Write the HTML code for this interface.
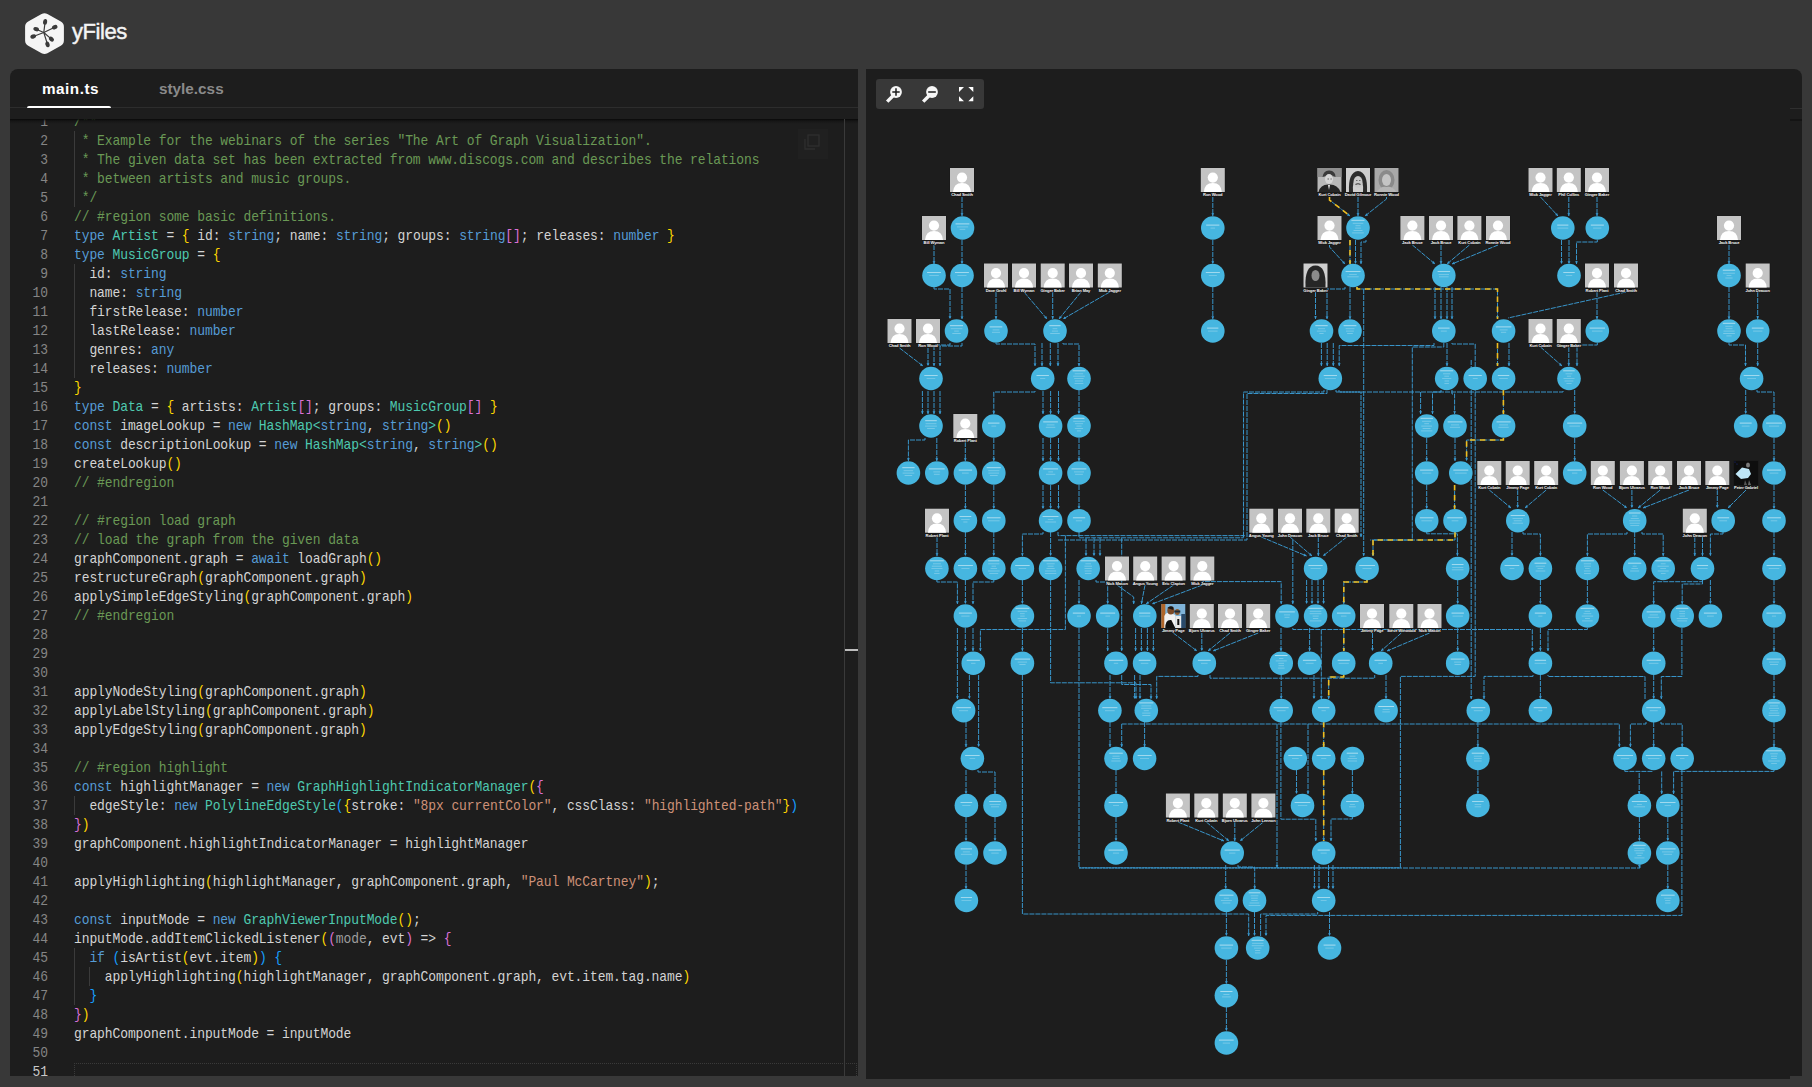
<!DOCTYPE html>
<html><head><meta charset="utf-8">
<style>
*{margin:0;padding:0;box-sizing:border-box}
html,body{width:1812px;height:1087px;overflow:hidden;background:#383838;font-family:"Liberation Sans",sans-serif}
#hdr{position:absolute;left:0;top:0;width:1812px;height:69px;background:#383838}
#logo{position:absolute;left:24px;top:12px;width:41px;height:43px}
#brand{position:absolute;left:72px;top:19px;font-size:22px;line-height:26px;color:#f4f4f4;letter-spacing:-0.45px;-webkit-text-stroke:0.45px #f4f4f4}
#left{position:absolute;left:10px;top:69px;width:848px;height:1007px;background:#1d1d1d;border-top-left-radius:8px;overflow:hidden}
#tabs{position:absolute;left:0;top:0;width:848px;height:39px;border-bottom:1px solid #2d2d2d}
.tab{position:absolute;top:10.7px;font-size:15.3px;line-height:18px;font-weight:bold;letter-spacing:0px}
#t1{left:32px;color:#ffffff;letter-spacing:0.5px}
#t2{left:149px;color:#8a8a8a}
#uline{position:absolute;left:17px;top:37px;width:84px;height:2.2px;background:#fff;border-radius:2px 2px 0 0}
#code{position:absolute;left:0;top:50px;width:834px;height:957px;overflow:hidden;font-family:"Liberation Mono",monospace;font-size:13px;color:#d4d4d4}
#shadow{position:absolute;left:0;top:50px;width:848px;height:5px;background:linear-gradient(rgba(8,8,8,0.95),rgba(8,8,8,0.35) 40%,rgba(29,29,29,0))}
.ln{position:absolute;left:0;height:19px;line-height:19px;white-space:pre;width:834px}
.num{position:absolute;right:796px;width:40px;top:1.4px;text-align:right;color:#858585;transform:scaleY(1.09);transform-origin:0 70%}
.tx{position:absolute;left:64px;top:1.4px;letter-spacing:-0.1px;transform:scaleY(1.09);transform-origin:0 70%}
.c{color:#6a9955}.k{color:#569cd6}.t{color:#4ec9b0}.s{color:#ce9178}.y{color:#ffd700}.p{color:#da70d6}.b{color:#179fff}.g{color:#9e9e9e}
#ruler{position:absolute;left:834px;top:50px;width:1px;height:957px;background:#3a3a3a}
.guide{position:absolute;width:1px;background:#3b3b3b}
#curline{position:absolute;left:64px;top:994px;width:783px;height:19px;border:1px dotted #3a3a3a;border-bottom:none}
#copyic{position:absolute;left:788px;top:60px;width:30px;height:30px;background:#202020}
#marker{position:absolute;left:835px;top:580px;width:13px;height:2px;background:#bdbdbd}
#gap{position:absolute;left:858px;top:69px;width:8px;height:1018px;background:#383838}
#right{position:absolute;left:866px;top:69px;width:936px;height:1010px;background:#1d1d1d;border-top-right-radius:8px;overflow:hidden}
#tb{position:absolute;left:876px;top:79px;width:108px;height:30px;background:#383838;border-radius:3px}
#gsvg{position:absolute;left:0;top:0}
</style></head><body>
<div id="hdr">
<svg id="logo" viewBox="0 0 41 43"><polygon points="20.5,7.3 33.9,14.8 33.9,28.6 20.5,36 7.1,28.6 7.1,14.8" fill="#f5f5f5" stroke="#f5f5f5" stroke-width="12" stroke-linejoin="round"/><g fill="#3a3a3a" stroke="#3a3a3a"><path d="M19.8 20.5L21.1 9.9" stroke-width="1.2"/><ellipse cx="21.10" cy="9.90" rx="2.9" ry="2.05" transform="rotate(-83.0 21.10 9.90)" stroke="none"/><path d="M19.8 20.5L30.7 15.2" stroke-width="1.2"/><ellipse cx="30.70" cy="15.20" rx="2.9" ry="2.05" transform="rotate(-25.9 30.70 15.20)" stroke="none"/><path d="M19.8 20.5L12.2 17.2" stroke-width="1.2"/><ellipse cx="12.20" cy="17.20" rx="2.9" ry="2.05" transform="rotate(-156.5 12.20 17.20)" stroke="none"/><path d="M19.8 20.5L9.2 24.5" stroke-width="1.2"/><ellipse cx="9.20" cy="24.50" rx="2.9" ry="2.05" transform="rotate(159.3 9.20 24.50)" stroke="none"/><path d="M19.8 20.5L27.4 27.1" stroke-width="1.2"/><ellipse cx="27.40" cy="27.10" rx="2.9" ry="2.05" transform="rotate(41.0 27.40 27.10)" stroke="none"/><path d="M19.8 20.5L23.5 32.4" stroke-width="1.2"/><ellipse cx="23.50" cy="32.40" rx="2.9" ry="2.05" transform="rotate(72.7 23.50 32.40)" stroke="none"/></g></svg>
<div id="brand">yFiles</div>
</div>
<div id="left">
<div id="tabs"><div class="tab" id="t1">main.ts</div><div class="tab" id="t2">style.css</div><div id="uline"></div></div>
<div id="code">
<div class="ln" style="top:-7.5px"><span class="num">1</span><span class="tx"><span class="c">/**</span></span></div>
<div class="ln" style="top:11.5px"><span class="num">2</span><span class="tx"><span class="c"> * Example for the webinars of the series &quot;The Art of Graph Visualization&quot;.</span></span></div>
<div class="ln" style="top:30.5px"><span class="num">3</span><span class="tx"><span class="c"> * The given data set has been extracted from www.discogs.com and describes the relations</span></span></div>
<div class="ln" style="top:49.5px"><span class="num">4</span><span class="tx"><span class="c"> * between artists and music groups.</span></span></div>
<div class="ln" style="top:68.5px"><span class="num">5</span><span class="tx"><span class="c"> */</span></span></div>
<div class="ln" style="top:87.5px"><span class="num">6</span><span class="tx"><span class="c">// #region some basic definitions.</span></span></div>
<div class="ln" style="top:106.5px"><span class="num">7</span><span class="tx"><span class="k">type</span> <span class="t">Artist</span> = <span class="y">{</span> id: <span class="k">string</span>; name: <span class="k">string</span>; groups: <span class="k">string</span><span class="p">[]</span>; releases: <span class="k">number</span> <span class="y">}</span></span></div>
<div class="ln" style="top:125.5px"><span class="num">8</span><span class="tx"><span class="k">type</span> <span class="t">MusicGroup</span> = <span class="y">{</span></span></div>
<div class="ln" style="top:144.5px"><span class="num">9</span><span class="tx">  id: <span class="k">string</span></span></div>
<div class="ln" style="top:163.5px"><span class="num">10</span><span class="tx">  name: <span class="k">string</span></span></div>
<div class="ln" style="top:182.5px"><span class="num">11</span><span class="tx">  firstRelease: <span class="k">number</span></span></div>
<div class="ln" style="top:201.5px"><span class="num">12</span><span class="tx">  lastRelease: <span class="k">number</span></span></div>
<div class="ln" style="top:220.5px"><span class="num">13</span><span class="tx">  genres: <span class="k">any</span></span></div>
<div class="ln" style="top:239.5px"><span class="num">14</span><span class="tx">  releases: <span class="k">number</span></span></div>
<div class="ln" style="top:258.5px"><span class="num">15</span><span class="tx"><span class="y">}</span></span></div>
<div class="ln" style="top:277.5px"><span class="num">16</span><span class="tx"><span class="k">type</span> <span class="t">Data</span> = <span class="y">{</span> artists: <span class="t">Artist</span><span class="p">[]</span>; groups: <span class="t">MusicGroup</span><span class="p">[]</span> <span class="y">}</span></span></div>
<div class="ln" style="top:296.5px"><span class="num">17</span><span class="tx"><span class="k">const</span> imageLookup = <span class="k">new</span> <span class="t">HashMap&lt;</span><span class="k">string</span>, <span class="k">string</span><span class="t">&gt;</span><span class="y">()</span></span></div>
<div class="ln" style="top:315.5px"><span class="num">18</span><span class="tx"><span class="k">const</span> descriptionLookup = <span class="k">new</span> <span class="t">HashMap&lt;</span><span class="k">string</span>, <span class="k">string</span><span class="t">&gt;</span><span class="y">()</span></span></div>
<div class="ln" style="top:334.5px"><span class="num">19</span><span class="tx">createLookup<span class="y">()</span></span></div>
<div class="ln" style="top:353.5px"><span class="num">20</span><span class="tx"><span class="c">// #endregion</span></span></div>
<div class="ln" style="top:372.5px"><span class="num">21</span><span class="tx"></span></div>
<div class="ln" style="top:391.5px"><span class="num">22</span><span class="tx"><span class="c">// #region load graph</span></span></div>
<div class="ln" style="top:410.5px"><span class="num">23</span><span class="tx"><span class="c">// load the graph from the given data</span></span></div>
<div class="ln" style="top:429.5px"><span class="num">24</span><span class="tx">graphComponent.graph = <span class="k">await</span> loadGraph<span class="y">()</span></span></div>
<div class="ln" style="top:448.5px"><span class="num">25</span><span class="tx">restructureGraph<span class="y">(</span>graphComponent.graph<span class="y">)</span></span></div>
<div class="ln" style="top:467.5px"><span class="num">26</span><span class="tx">applySimpleEdgeStyling<span class="y">(</span>graphComponent.graph<span class="y">)</span></span></div>
<div class="ln" style="top:486.5px"><span class="num">27</span><span class="tx"><span class="c">// #endregion</span></span></div>
<div class="ln" style="top:505.5px"><span class="num">28</span><span class="tx"></span></div>
<div class="ln" style="top:524.5px"><span class="num">29</span><span class="tx"></span></div>
<div class="ln" style="top:543.5px"><span class="num">30</span><span class="tx"></span></div>
<div class="ln" style="top:562.5px"><span class="num">31</span><span class="tx">applyNodeStyling<span class="y">(</span>graphComponent.graph<span class="y">)</span></span></div>
<div class="ln" style="top:581.5px"><span class="num">32</span><span class="tx">applyLabelStyling<span class="y">(</span>graphComponent.graph<span class="y">)</span></span></div>
<div class="ln" style="top:600.5px"><span class="num">33</span><span class="tx">applyEdgeStyling<span class="y">(</span>graphComponent.graph<span class="y">)</span></span></div>
<div class="ln" style="top:619.5px"><span class="num">34</span><span class="tx"></span></div>
<div class="ln" style="top:638.5px"><span class="num">35</span><span class="tx"><span class="c">// #region highlight</span></span></div>
<div class="ln" style="top:657.5px"><span class="num">36</span><span class="tx"><span class="k">const</span> highlightManager = <span class="k">new</span> <span class="t">GraphHighlightIndicatorManager</span><span class="y">(</span><span class="p">{</span></span></div>
<div class="ln" style="top:676.5px"><span class="num">37</span><span class="tx">  edgeStyle: <span class="k">new</span> <span class="t">PolylineEdgeStyle</span><span class="b">(</span><span class="y">{</span>stroke: <span class="s">&quot;8px currentColor&quot;</span>, cssClass: <span class="s">&quot;highlighted-path&quot;</span><span class="y">}</span><span class="b">)</span></span></div>
<div class="ln" style="top:695.5px"><span class="num">38</span><span class="tx"><span class="p">}</span><span class="y">)</span></span></div>
<div class="ln" style="top:714.5px"><span class="num">39</span><span class="tx">graphComponent.highlightIndicatorManager = highlightManager</span></div>
<div class="ln" style="top:733.5px"><span class="num">40</span><span class="tx"></span></div>
<div class="ln" style="top:752.5px"><span class="num">41</span><span class="tx">applyHighlighting<span class="y">(</span>highlightManager, graphComponent.graph, <span class="s">&quot;Paul McCartney&quot;</span><span class="y">)</span>;</span></div>
<div class="ln" style="top:771.5px"><span class="num">42</span><span class="tx"></span></div>
<div class="ln" style="top:790.5px"><span class="num">43</span><span class="tx"><span class="k">const</span> inputMode = <span class="k">new</span> <span class="t">GraphViewerInputMode</span><span class="y">()</span>;</span></div>
<div class="ln" style="top:809.5px"><span class="num">44</span><span class="tx">inputMode.addItemClickedListener<span class="y">(</span><span class="p">(</span><span class="g">mode</span>, evt<span class="p">)</span> =&gt; <span class="p">{</span></span></div>
<div class="ln" style="top:828.5px"><span class="num">45</span><span class="tx">  <span class="k">if</span> <span class="b">(</span>isArtist<span class="y">(</span>evt.item<span class="y">)</span><span class="b">)</span> <span class="b">{</span></span></div>
<div class="ln" style="top:847.5px"><span class="num">46</span><span class="tx">    applyHighlighting<span class="y">(</span>highlightManager, graphComponent.graph, evt.item.tag.name<span class="y">)</span></span></div>
<div class="ln" style="top:866.5px"><span class="num">47</span><span class="tx">  <span class="b">}</span></span></div>
<div class="ln" style="top:885.5px"><span class="num">48</span><span class="tx"><span class="p">}</span><span class="y">)</span></span></div>
<div class="ln" style="top:904.5px"><span class="num">49</span><span class="tx">graphComponent.inputMode = inputMode</span></div>
<div class="ln" style="top:923.5px"><span class="num">50</span><span class="tx"></span></div>
<div class="ln" style="top:942.5px"><span class="num" style="color:#c8c8c8">51</span><span class="tx"></span></div>
</div>

<div class="guide" style="left:64px;top:61.5px;height:76px"></div>
<div class="guide" style="left:64px;top:194.5px;height:114px"></div>
<div class="guide" style="left:64px;top:726.5px;height:19px"></div>
<div class="guide" style="left:64px;top:878.5px;height:57px"></div>
<div class="guide" style="left:79px;top:897.5px;height:19px"></div>
<div id="curline"></div>
<div id="copyic"><svg width="30" height="30" viewBox="0 0 30 30"><g fill="none" stroke="#2e2e2e" stroke-width="1.3"><rect x="10" y="6" width="11" height="11"/><path d="M7 10V20H17"/></g></svg></div>
<div id="shadow"></div>
<div id="ruler"></div><div id="marker"></div>
</div>
<div id="gap"></div><div id="notch" style="position:absolute;z-index:5;left:1790px;top:1076px;width:12px;height:3px;background:#383838"></div>
<div id="right"></div>
<svg id="gsvg" width="1812" height="1087" viewBox="0 0 1812 1087" style="position:absolute;left:0;top:0">
<g>
<path d="M962 197V216 M962 240V264 M934 245V264 M934 287V289H950V319 M962 287V319 M996 292V319 M1024 292L1047 319 M1052.7 292V319 M1081 292L1059 319 M1109.8 292L1063 319 M899.5 348L923 366 M928 348V366 M950 343V345H934V366 M962 343V346H940V366 M996 343V344H1035V366 M1042 343V366 M1050.3 343V366 M1058 343V366 M1063 343V344H1079V366 M922.4 391V414 M928 391V414 M934 391V414 M940 391V414 M925 438V440H908.4V461 M936.8 438V461 M965.3 442V461 M1035 391V392H993.8V414 M1043 391V414 M1050.6 391V414 M1058.5 391V414 M993.8 438V461 M1043 438V461 M1050.6 438V461 M1058.5 438V461 M1079 390V414 M1079 438V461 M1079 485V509 M965.4 485V509 M993.8 485V509 M1043 485V509 M1050.6 485V509 M1058.5 485V509 M937 537V556 M1043 532V534H1022.4V556 M965.4 532V556 M993.8 532V556 M1050.6 532V556 M1058 532V535.6H1243.5 M1079 532V537.8H1243.5 M1065.4 535.6V629.5H980.4V651 M1086 537.8V556 M1094 537.8V556 M1100 537.8V556 M1121.7 537.8V651 M1022.4 580V604 M1022.4 628V651 M936.9 580V582H957.4V604 M965.4 580V604 M993.8 580V582H973V604 M1050.6 580V682.8H1136V699 M1079 580V604 M1096 580V582H1107.7V604 M1117 585L1133.7 597V604 M1079 628V868H1640V864 M1107.7 628V651 M957.4 628V699 M965.3 628V651 M973 628V651 M1022.4 675V914H1248.7V936 M969.4 675V699 M978.6 675V747 M1110 675V699 M1121.7 675V684.5H1151V699 M966 722V747 M1110 722V747 M1121.7 724V747 M966 770V794 M978 770V772H995V794 M966 817V841 M995 817V841 M966 865V889 M1116 770V794 M1116 817V841 M1212.8 197V216 M1212.8 240V264 M1212.8 287V319 M1358 197V216 M1386.5 197V199L1365 216 M1329.5 245V247L1345 264 M1355.5 240V264 M1366 240V242H1361V264 M1315.5 292V319 M1345 287V289H1327V319 M1350 287V319 M1363.7 289V556 M1321.4 343V366 M1327.2 343V366 M1333.3 343V366 M1434 343V345.5H1339.2V366 M1324 390V392H1243.5V537.8 M1327 390V393.5H1247V540H1058 M1336 390V392H1361V537 M1339 390V392H1563V390 M1412.4 245L1435 264 M1441 245V264 M1469.4 245L1447 264 M1498 245L1452 264 M1540.5 197L1558 216 M1568.8 197V216 M1597 197V216 M1561.5 240V264 M1569 240V264 M1597.3 240V242H1576.5V264 M1435 287V319 M1441 287V319 M1447 287V319 M1452 287V319 M1597 292V319 M1626 292L1508 318 M1540.5 347L1562 366 M1568.8 347V366 M1597.3 343V345H1577V366 M1443.8 343V347H1412.3V540H1370 M1447 343V366 M1452 343V344H1475.2V676.4H1400.4V867.8H1079 M1509 343V366 M1729 245V264 M1729 287V319 M1757.7 292V319 M1729 343V345H1745.5V366 M1757.7 343V366 M1441 390V392H1432.5V414 M1420.6 392V414 M1452 390V394H1454.6V414 M1574.7 390V414 M1574.7 438V461 M1426.7 438V461 M1426.7 485V509 M1455 438V461 M1489.3 490L1511 508 M1517.7 490V508 M1546.2 490L1525 508 M1602.8 490L1627 508 M1631.9 490V508 M1660.2 490L1638 508 M1689 490L1643 508 M1717.3 490V508 M1746 490L1728 508 M1471.2 360V699 M1745.7 390V414 M1757 390V392H1774V414 M1774 438V461 M1774 485V509 M1774 532V556 M1774 580V604 M1774 628V651 M1774 675V699 M1774 722V747 M1774 770V771.4H1673.6V794 M1261.3 537L1306.6 556 M1290 537L1312 556 M1318.3 537V556 M1346.7 537L1323 556 M1292.8 540V604 M1426.7 532V533.8H1457.4V556 M1512 532V556 M1523 532V534H1540.4V556 M1627 532V534H1587.4V556 M1634.7 532V556 M1642 532V534H1663.2V556 M1694.8 537V556 M1702.5 537V556 M1723 532V534H1710.4V556 M1457.7 580V604 M1457.7 628V651 M1540.4 580V604 M1540.4 628V651 M1587.4 580V604 M1587.4 628V629.5H1548V651 M1370 629.5H1532.3V651 M1702.5 580V581.7H1653.7V604 M1702.5 580V584H1682.2V604 M1710.4 580V604 M1653.7 628V651 M1653.7 675V699 M1681.9 628V676.5H1661.3V699 M1645 699V676.5H1548V675 M1533 675V676.4H1484V699 M1540.4 675V699 M1306.6 580V604 M1312 580V604 M1318 580V604 M1323.6 580V604 M1145 585L1141.4 604 M1173.6 585L1146 604 M1202.3 585L1152 604 M1202.3 585V581.6H1281.2V604 M1173.3 633L1197 651 M1201.8 633V651 M1230 633L1208 651 M1258.2 633L1213 651 M1135.6 628V651 M1141.4 628V651 M1147.4 628V651 M1153.4 628V651 M1281 628V651 M1292.8 628V629.5H1370 M1309.6 628V651 M1321.3 629.5V699 M1372.5 633V651 M1401.3 633L1381 651 M1429.5 633L1387 651 M1134.6 675V699 M1140 675V699 M1198 675V676.4H1156.7V699 M1210 675V678.2H1374.7V675 M1281.2 675V699 M1314 675V699 M1386 675V699 M1121.7 724H1619.3V747 M1144.6 722V747 M1280.9 722V819.2H1315.8V841 M1277 724V867.8 M1296.5 770V794 M1308 724V794 M1352.4 770V794 M1352.4 817V819H1331V841 M1477.9 722V747 M1477.9 770V794 M1177.9 822L1224 841 M1206.3 822L1229 841 M1234.8 822V841 M1263.4 822L1240 841 M1225.7 865V889 M1238 865V867H1254.7V889 M1314.4 865V889 M1319 865V889 M1328.5 865V889 M1333 865V889 M1646 722V724H1630.4V747 M1653.7 722V747 M1661 722V724H1682.2V747 M1624.8 770V771.4H1653.4 M1639.2 773V794 M1661.7 771.4V794 M1681.9 770V915.4H1266V936 M1639.4 817V841 M1667.8 817V841 M1667.8 865V889 M1226.4 912V936 M1226.4 960V984 M1226.4 1007V1031 M1254.5 912V936 M1260.6 936V914H1317.7V912 M1329.5 912V936 M1639.4 865V867.8 M1329.5 197V200L1350 216 M1350 240V264 M1357 287V289H1497.5V319 M1497.5 343V366 M1503.4 390V414 M1503.4 438V440H1466.6V461 M1454.6 485V509 M1455 532V540H1373V556 M1367 580V582H1343.8V604 M1343.8 628V651 M1343.7 675V677H1328.7V699 M1323.7 722V747 M1323.7 770V841" fill="none" stroke="#3a9bd3" stroke-width="0.95" stroke-dasharray="5 1"/>
<path d="M962.0 216.0L960.6 213.2L963.4 213.2Z M962.0 264.0L960.6 261.2L963.4 261.2Z M934.0 264.0L932.6 261.2L935.4 261.2Z M950.0 319.0L948.6 316.2L951.4 316.2Z M962.0 319.0L960.6 316.2L963.4 316.2Z M996.0 319.0L994.6 316.2L997.4 316.2Z M1047.0 319.0L1044.1 317.8L1046.3 316.0Z M1052.7 319.0L1051.3 316.2L1054.1 316.2Z M1059.0 319.0L1059.7 315.9L1061.9 317.7Z M1063.0 319.0L1064.7 316.4L1066.1 318.8Z M923.0 366.0L919.9 365.4L921.6 363.2Z M928.0 366.0L926.6 363.2L929.4 363.2Z M934.0 366.0L932.6 363.2L935.4 363.2Z M940.0 366.0L938.6 363.2L941.4 363.2Z M1035.0 366.0L1033.6 363.2L1036.4 363.2Z M1042.0 366.0L1040.6 363.2L1043.4 363.2Z M1050.3 366.0L1048.9 363.2L1051.7 363.2Z M1058.0 366.0L1056.6 363.2L1059.4 363.2Z M1079.0 366.0L1077.6 363.2L1080.4 363.2Z M922.4 414.0L921.0 411.2L923.8 411.2Z M928.0 414.0L926.6 411.2L929.4 411.2Z M934.0 414.0L932.6 411.2L935.4 411.2Z M940.0 414.0L938.6 411.2L941.4 411.2Z M908.4 461.0L907.0 458.2L909.8 458.2Z M936.8 461.0L935.4 458.2L938.2 458.2Z M965.3 461.0L963.9 458.2L966.7 458.2Z M993.8 414.0L992.4 411.2L995.2 411.2Z M1043.0 414.0L1041.6 411.2L1044.4 411.2Z M1050.6 414.0L1049.2 411.2L1052.0 411.2Z M1058.5 414.0L1057.1 411.2L1059.9 411.2Z M993.8 461.0L992.4 458.2L995.2 458.2Z M1043.0 461.0L1041.6 458.2L1044.4 458.2Z M1050.6 461.0L1049.2 458.2L1052.0 458.2Z M1058.5 461.0L1057.1 458.2L1059.9 458.2Z M1079.0 414.0L1077.6 411.2L1080.4 411.2Z M1079.0 461.0L1077.6 458.2L1080.4 458.2Z M1079.0 509.0L1077.6 506.2L1080.4 506.2Z M965.4 509.0L964.0 506.2L966.8 506.2Z M993.8 509.0L992.4 506.2L995.2 506.2Z M1043.0 509.0L1041.6 506.2L1044.4 506.2Z M1050.6 509.0L1049.2 506.2L1052.0 506.2Z M1058.5 509.0L1057.1 506.2L1059.9 506.2Z M937.0 556.0L935.6 553.2L938.4 553.2Z M1022.4 556.0L1021.0 553.2L1023.8 553.2Z M965.4 556.0L964.0 553.2L966.8 553.2Z M993.8 556.0L992.4 553.2L995.2 553.2Z M1050.6 556.0L1049.2 553.2L1052.0 553.2Z M980.4 651.0L979.0 648.2L981.8 648.2Z M1086.0 556.0L1084.6 553.2L1087.4 553.2Z M1094.0 556.0L1092.6 553.2L1095.4 553.2Z M1100.0 556.0L1098.6 553.2L1101.4 553.2Z M1121.7 651.0L1120.3 648.2L1123.1 648.2Z M1022.4 604.0L1021.0 601.2L1023.8 601.2Z M1022.4 651.0L1021.0 648.2L1023.8 648.2Z M957.4 604.0L956.0 601.2L958.8 601.2Z M965.4 604.0L964.0 601.2L966.8 601.2Z M973.0 604.0L971.6 601.2L974.4 601.2Z M1136.0 699.0L1134.6 696.2L1137.4 696.2Z M1079.0 604.0L1077.6 601.2L1080.4 601.2Z M1107.7 604.0L1106.3 601.2L1109.1 601.2Z M1133.7 604.0L1132.3 601.2L1135.1 601.2Z M1107.7 651.0L1106.3 648.2L1109.1 648.2Z M957.4 699.0L956.0 696.2L958.8 696.2Z M965.3 651.0L963.9 648.2L966.7 648.2Z M973.0 651.0L971.6 648.2L974.4 648.2Z M1248.7 936.0L1247.3 933.2L1250.1 933.2Z M969.4 699.0L968.0 696.2L970.8 696.2Z M978.6 747.0L977.2 744.2L980.0 744.2Z M1110.0 699.0L1108.6 696.2L1111.4 696.2Z M1151.0 699.0L1149.6 696.2L1152.4 696.2Z M966.0 747.0L964.6 744.2L967.4 744.2Z M1110.0 747.0L1108.6 744.2L1111.4 744.2Z M1121.7 747.0L1120.3 744.2L1123.1 744.2Z M966.0 794.0L964.6 791.2L967.4 791.2Z M995.0 794.0L993.6 791.2L996.4 791.2Z M966.0 841.0L964.6 838.2L967.4 838.2Z M995.0 841.0L993.6 838.2L996.4 838.2Z M966.0 889.0L964.6 886.2L967.4 886.2Z M1116.0 794.0L1114.6 791.2L1117.4 791.2Z M1116.0 841.0L1114.6 838.2L1117.4 838.2Z M1212.8 216.0L1211.4 213.2L1214.2 213.2Z M1212.8 264.0L1211.4 261.2L1214.2 261.2Z M1212.8 319.0L1211.4 316.2L1214.2 316.2Z M1358.0 216.0L1356.6 213.2L1359.4 213.2Z M1365.0 216.0L1366.3 213.2L1368.1 215.4Z M1345.0 264.0L1342.1 262.9L1344.1 261.0Z M1355.5 264.0L1354.1 261.2L1356.9 261.2Z M1361.0 264.0L1359.6 261.2L1362.4 261.2Z M1315.5 319.0L1314.1 316.2L1316.9 316.2Z M1327.0 319.0L1325.6 316.2L1328.4 316.2Z M1350.0 319.0L1348.6 316.2L1351.4 316.2Z M1363.7 556.0L1362.3 553.2L1365.1 553.2Z M1321.4 366.0L1320.0 363.2L1322.8 363.2Z M1327.2 366.0L1325.8 363.2L1328.6 363.2Z M1333.3 366.0L1331.9 363.2L1334.7 363.2Z M1339.2 366.0L1337.8 363.2L1340.6 363.2Z M1243.5 537.8L1242.1 535.0L1244.9 535.0Z M1361.0 537.0L1359.6 534.2L1362.4 534.2Z M1435.0 264.0L1432.0 263.3L1433.8 261.1Z M1441.0 264.0L1439.6 261.2L1442.4 261.2Z M1447.0 264.0L1448.2 261.1L1450.0 263.3Z M1452.0 264.0L1454.1 261.6L1455.1 264.2Z M1558.0 216.0L1555.1 214.9L1557.1 213.0Z M1568.8 216.0L1567.4 213.2L1570.2 213.2Z M1597.0 216.0L1595.6 213.2L1598.4 213.2Z M1561.5 264.0L1560.1 261.2L1562.9 261.2Z M1569.0 264.0L1567.6 261.2L1570.4 261.2Z M1576.5 264.0L1575.1 261.2L1577.9 261.2Z M1435.0 319.0L1433.6 316.2L1436.4 316.2Z M1441.0 319.0L1439.6 316.2L1442.4 316.2Z M1447.0 319.0L1445.6 316.2L1448.4 316.2Z M1452.0 319.0L1450.6 316.2L1453.4 316.2Z M1597.0 319.0L1595.6 316.2L1598.4 316.2Z M1562.0 366.0L1559.0 365.2L1560.8 363.1Z M1568.8 366.0L1567.4 363.2L1570.2 363.2Z M1577.0 366.0L1575.6 363.2L1578.4 363.2Z M1447.0 366.0L1445.6 363.2L1448.4 363.2Z M1509.0 366.0L1507.6 363.2L1510.4 363.2Z M1729.0 264.0L1727.6 261.2L1730.4 261.2Z M1729.0 319.0L1727.6 316.2L1730.4 316.2Z M1757.7 319.0L1756.3 316.2L1759.1 316.2Z M1745.5 366.0L1744.1 363.2L1746.9 363.2Z M1757.7 366.0L1756.3 363.2L1759.1 363.2Z M1432.5 414.0L1431.1 411.2L1433.9 411.2Z M1420.6 414.0L1419.2 411.2L1422.0 411.2Z M1454.6 414.0L1453.2 411.2L1456.0 411.2Z M1574.7 414.0L1573.3 411.2L1576.1 411.2Z M1574.7 461.0L1573.3 458.2L1576.1 458.2Z M1426.7 461.0L1425.3 458.2L1428.1 458.2Z M1426.7 509.0L1425.3 506.2L1428.1 506.2Z M1455.0 461.0L1453.6 458.2L1456.4 458.2Z M1511.0 508.0L1508.0 507.3L1509.7 505.1Z M1517.7 508.0L1516.3 505.2L1519.1 505.2Z M1525.0 508.0L1526.2 505.1L1528.0 507.3Z M1627.0 508.0L1623.9 507.5L1625.6 505.2Z M1631.9 508.0L1630.5 505.2L1633.3 505.2Z M1638.0 508.0L1639.3 505.1L1641.1 507.3Z M1643.0 508.0L1645.1 505.7L1646.1 508.3Z M1717.3 508.0L1715.9 505.2L1718.7 505.2Z M1728.0 508.0L1729.0 505.0L1731.0 507.0Z M1471.2 699.0L1469.8 696.2L1472.6 696.2Z M1745.7 414.0L1744.3 411.2L1747.1 411.2Z M1774.0 414.0L1772.6 411.2L1775.4 411.2Z M1774.0 461.0L1772.6 458.2L1775.4 458.2Z M1774.0 509.0L1772.6 506.2L1775.4 506.2Z M1774.0 556.0L1772.6 553.2L1775.4 553.2Z M1774.0 604.0L1772.6 601.2L1775.4 601.2Z M1774.0 651.0L1772.6 648.2L1775.4 648.2Z M1774.0 699.0L1772.6 696.2L1775.4 696.2Z M1774.0 747.0L1772.6 744.2L1775.4 744.2Z M1673.6 794.0L1672.2 791.2L1675.0 791.2Z M1306.6 556.0L1303.5 556.2L1304.6 553.6Z M1312.0 556.0L1309.0 555.2L1310.8 553.1Z M1318.3 556.0L1316.9 553.2L1319.7 553.2Z M1323.0 556.0L1324.3 553.2L1326.1 555.3Z M1292.8 604.0L1291.4 601.2L1294.2 601.2Z M1457.4 556.0L1456.0 553.2L1458.8 553.2Z M1512.0 556.0L1510.6 553.2L1513.4 553.2Z M1540.4 556.0L1539.0 553.2L1541.8 553.2Z M1587.4 556.0L1586.0 553.2L1588.8 553.2Z M1634.7 556.0L1633.3 553.2L1636.1 553.2Z M1663.2 556.0L1661.8 553.2L1664.6 553.2Z M1694.8 556.0L1693.4 553.2L1696.2 553.2Z M1702.5 556.0L1701.1 553.2L1703.9 553.2Z M1710.4 556.0L1709.0 553.2L1711.8 553.2Z M1457.7 604.0L1456.3 601.2L1459.1 601.2Z M1457.7 651.0L1456.3 648.2L1459.1 648.2Z M1540.4 604.0L1539.0 601.2L1541.8 601.2Z M1540.4 651.0L1539.0 648.2L1541.8 648.2Z M1587.4 604.0L1586.0 601.2L1588.8 601.2Z M1548.0 651.0L1546.6 648.2L1549.4 648.2Z M1532.3 651.0L1530.9 648.2L1533.7 648.2Z M1653.7 604.0L1652.3 601.2L1655.1 601.2Z M1682.2 604.0L1680.8 601.2L1683.6 601.2Z M1710.4 604.0L1709.0 601.2L1711.8 601.2Z M1653.7 651.0L1652.3 648.2L1655.1 648.2Z M1653.7 699.0L1652.3 696.2L1655.1 696.2Z M1661.3 699.0L1659.9 696.2L1662.7 696.2Z M1484.0 699.0L1482.6 696.2L1485.4 696.2Z M1540.4 699.0L1539.0 696.2L1541.8 696.2Z M1306.6 604.0L1305.2 601.2L1308.0 601.2Z M1312.0 604.0L1310.6 601.2L1313.4 601.2Z M1318.0 604.0L1316.6 601.2L1319.4 601.2Z M1323.6 604.0L1322.2 601.2L1325.0 601.2Z M1141.4 604.0L1140.5 601.0L1143.3 601.5Z M1146.0 604.0L1147.5 601.3L1149.1 603.6Z M1152.0 604.0L1154.1 601.7L1155.1 604.3Z M1281.2 604.0L1279.8 601.2L1282.6 601.2Z M1197.0 651.0L1193.9 650.4L1195.6 648.2Z M1201.8 651.0L1200.4 648.2L1203.2 648.2Z M1208.0 651.0L1209.3 648.1L1211.1 650.3Z M1213.0 651.0L1215.1 648.7L1216.1 651.3Z M1135.6 651.0L1134.2 648.2L1137.0 648.2Z M1141.4 651.0L1140.0 648.2L1142.8 648.2Z M1147.4 651.0L1146.0 648.2L1148.8 648.2Z M1153.4 651.0L1152.0 648.2L1154.8 648.2Z M1281.0 651.0L1279.6 648.2L1282.4 648.2Z M1309.6 651.0L1308.2 648.2L1311.0 648.2Z M1321.3 699.0L1319.9 696.2L1322.7 696.2Z M1372.5 651.0L1371.1 648.2L1373.9 648.2Z M1381.0 651.0L1382.2 648.1L1384.0 650.2Z M1387.0 651.0L1389.0 648.6L1390.1 651.2Z M1134.6 699.0L1133.2 696.2L1136.0 696.2Z M1140.0 699.0L1138.6 696.2L1141.4 696.2Z M1156.7 699.0L1155.3 696.2L1158.1 696.2Z M1281.2 699.0L1279.8 696.2L1282.6 696.2Z M1314.0 699.0L1312.6 696.2L1315.4 696.2Z M1386.0 699.0L1384.6 696.2L1387.4 696.2Z M1619.3 747.0L1617.9 744.2L1620.7 744.2Z M1144.6 747.0L1143.2 744.2L1146.0 744.2Z M1315.8 841.0L1314.4 838.2L1317.2 838.2Z M1277.0 867.8L1275.6 865.0L1278.4 865.0Z M1296.5 794.0L1295.1 791.2L1297.9 791.2Z M1308.0 794.0L1306.6 791.2L1309.4 791.2Z M1352.4 794.0L1351.0 791.2L1353.8 791.2Z M1331.0 841.0L1329.6 838.2L1332.4 838.2Z M1477.9 747.0L1476.5 744.2L1479.3 744.2Z M1477.9 794.0L1476.5 791.2L1479.3 791.2Z M1224.0 841.0L1220.9 841.2L1221.9 838.6Z M1229.0 841.0L1226.0 840.3L1227.8 838.1Z M1234.8 841.0L1233.4 838.2L1236.2 838.2Z M1240.0 841.0L1241.3 838.1L1243.1 840.3Z M1225.7 889.0L1224.3 886.2L1227.1 886.2Z M1254.7 889.0L1253.3 886.2L1256.1 886.2Z M1314.4 889.0L1313.0 886.2L1315.8 886.2Z M1319.0 889.0L1317.6 886.2L1320.4 886.2Z M1328.5 889.0L1327.1 886.2L1329.9 886.2Z M1333.0 889.0L1331.6 886.2L1334.4 886.2Z M1630.4 747.0L1629.0 744.2L1631.8 744.2Z M1653.7 747.0L1652.3 744.2L1655.1 744.2Z M1682.2 747.0L1680.8 744.2L1683.6 744.2Z M1639.2 794.0L1637.8 791.2L1640.6 791.2Z M1661.7 794.0L1660.3 791.2L1663.1 791.2Z M1266.0 936.0L1264.6 933.2L1267.4 933.2Z M1639.4 841.0L1638.0 838.2L1640.8 838.2Z M1667.8 841.0L1666.4 838.2L1669.2 838.2Z M1667.8 889.0L1666.4 886.2L1669.2 886.2Z M1226.4 936.0L1225.0 933.2L1227.8 933.2Z M1226.4 984.0L1225.0 981.2L1227.8 981.2Z M1226.4 1031.0L1225.0 1028.2L1227.8 1028.2Z M1254.5 936.0L1253.1 933.2L1255.9 933.2Z M1329.5 936.0L1328.1 933.2L1330.9 933.2Z M1639.4 867.8L1638.0 865.0L1640.8 865.0Z M1350.0 216.0L1346.9 215.4L1348.7 213.2Z M1350.0 264.0L1348.6 261.2L1351.4 261.2Z M1497.5 319.0L1496.1 316.2L1498.9 316.2Z M1497.5 366.0L1496.1 363.2L1498.9 363.2Z M1503.4 414.0L1502.0 411.2L1504.8 411.2Z M1466.6 461.0L1465.2 458.2L1468.0 458.2Z M1454.6 509.0L1453.2 506.2L1456.0 506.2Z M1373.0 556.0L1371.6 553.2L1374.4 553.2Z M1343.8 604.0L1342.4 601.2L1345.2 601.2Z M1343.8 651.0L1342.4 648.2L1345.2 648.2Z M1328.7 699.0L1327.3 696.2L1330.1 696.2Z M1323.7 747.0L1322.3 744.2L1325.1 744.2Z M1323.7 841.0L1322.3 838.2L1325.1 838.2Z" fill="#3a9bd3"/>
<path d="M1329.5 197V200L1350 216 M1350 240V264 M1357 287V289H1497.5V319 M1497.5 343V366 M1503.4 390V414 M1503.4 438V440H1466.6V461 M1454.6 485V509 M1455 532V540H1373V556 M1367 580V582H1343.8V604 M1343.8 628V651 M1343.7 675V677H1328.7V699 M1323.7 722V747 M1323.7 770V841" fill="none" stroke="#f0bd1e" stroke-width="1.6" stroke-dasharray="5.5 4.5"/>
<rect x="949.5" y="167.5" width="25" height="25" fill="#141414" opacity="0.6"/>
<g transform="translate(950.0 168.0)"><rect x="0" y="0" width="24" height="24" fill="#c4c4c4"/><circle cx="12" cy="9.6" r="5.1" fill="#fff"/><path d="M3 24 Q3.6 15 12 14.9 Q20.4 15 21 24 Z" fill="#fff"/></g>
<text x="962.0" y="196.2" text-anchor="middle" font-family="Liberation Sans" font-weight="bold" font-size="4.1" fill="#f8f8f8" stroke="#161616" stroke-width="0.8" paint-order="stroke" letter-spacing="-0.12">Chad Smith</text>
<rect x="1200.3" y="167.5" width="25" height="25" fill="#141414" opacity="0.6"/>
<g transform="translate(1200.8 168.0)"><rect x="0" y="0" width="24" height="24" fill="#c4c4c4"/><circle cx="12" cy="9.6" r="5.1" fill="#fff"/><path d="M3 24 Q3.6 15 12 14.9 Q20.4 15 21 24 Z" fill="#fff"/></g>
<text x="1212.8" y="196.2" text-anchor="middle" font-family="Liberation Sans" font-weight="bold" font-size="4.1" fill="#f8f8f8" stroke="#161616" stroke-width="0.8" paint-order="stroke" letter-spacing="-0.12">Ron Wood</text>
<rect x="1317.0" y="167.5" width="25" height="25" fill="#141414" opacity="0.6"/>
<g transform="translate(1317.5 168.0)"><rect width="24" height="24" fill="#b9b9b9"/><path d="M0 0H24V9H0Z" fill="#8f8f8f"/><path d="M5 9Q6 2 12 2.5Q18 3 18 9L16 8Q12 6 8 8Z" fill="#3a3a3a"/><ellipse cx="11.5" cy="11" rx="4" ry="5" fill="#d6d6d6"/><path d="M10 11h1.5M13 11h1.2" stroke="#444" stroke-width="0.8"/><path d="M1 24Q3 16 11.5 16.5Q20 16 23 24Z" fill="#252525"/><path d="M10.5 17L11.5 22L12.5 17Z" fill="#e8e8e8"/></g>
<text x="1329.5" y="196.2" text-anchor="middle" font-family="Liberation Sans" font-weight="bold" font-size="4.1" fill="#f8f8f8" stroke="#161616" stroke-width="0.8" paint-order="stroke" letter-spacing="-0.12">Kurt Cobain</text>
<rect x="1345.5" y="167.5" width="25" height="25" fill="#141414" opacity="0.6"/>
<g transform="translate(1346.0 168.0)"><rect width="24" height="24" fill="#cfcfcf"/><path d="M3 24Q2 4 12 3Q22 4 21 24H17Q18 12 12 10Q6 12 7 24Z" fill="#2c2c2c"/><ellipse cx="12" cy="14" rx="4.5" ry="6" fill="#c9c9c9"/><path d="M9.5 16.5Q12 15 14.5 16.5" stroke="#3c3c3c" stroke-width="1.2" fill="none"/><path d="M10 12.5h1.5M13 12.5h1.5" stroke="#555" stroke-width="0.8"/></g>
<text x="1358.0" y="196.2" text-anchor="middle" font-family="Liberation Sans" font-weight="bold" font-size="4.1" fill="#f8f8f8" stroke="#161616" stroke-width="0.8" paint-order="stroke" letter-spacing="-0.12">David Gilmour</text>
<rect x="1374.0" y="167.5" width="25" height="25" fill="#141414" opacity="0.6"/>
<g transform="translate(1374.5 168.0)"><rect width="24" height="24" fill="#a9a9a9"/><ellipse cx="12" cy="12" rx="8" ry="10" fill="#8a8a8a"/><ellipse cx="12" cy="12" rx="4.5" ry="6" fill="#c4c4c4"/><path d="M2 24Q6 18 12 19Q18 18 22 24Z" fill="#b5b5b5"/></g>
<text x="1386.5" y="196.2" text-anchor="middle" font-family="Liberation Sans" font-weight="bold" font-size="4.1" fill="#f8f8f8" stroke="#161616" stroke-width="0.8" paint-order="stroke" letter-spacing="-0.12">Ronnie Wood</text>
<rect x="1528.0" y="167.5" width="25" height="25" fill="#141414" opacity="0.6"/>
<g transform="translate(1528.5 168.0)"><rect x="0" y="0" width="24" height="24" fill="#c4c4c4"/><circle cx="12" cy="9.6" r="5.1" fill="#fff"/><path d="M3 24 Q3.6 15 12 14.9 Q20.4 15 21 24 Z" fill="#fff"/></g>
<text x="1540.5" y="196.2" text-anchor="middle" font-family="Liberation Sans" font-weight="bold" font-size="4.1" fill="#f8f8f8" stroke="#161616" stroke-width="0.8" paint-order="stroke" letter-spacing="-0.12">Mick Jagger</text>
<rect x="1556.3" y="167.5" width="25" height="25" fill="#141414" opacity="0.6"/>
<g transform="translate(1556.8 168.0)"><rect x="0" y="0" width="24" height="24" fill="#c4c4c4"/><circle cx="12" cy="9.6" r="5.1" fill="#fff"/><path d="M3 24 Q3.6 15 12 14.9 Q20.4 15 21 24 Z" fill="#fff"/></g>
<text x="1568.8" y="196.2" text-anchor="middle" font-family="Liberation Sans" font-weight="bold" font-size="4.1" fill="#f8f8f8" stroke="#161616" stroke-width="0.8" paint-order="stroke" letter-spacing="-0.12">Phil Collins</text>
<rect x="1584.5" y="167.5" width="25" height="25" fill="#141414" opacity="0.6"/>
<g transform="translate(1585.0 168.0)"><rect x="0" y="0" width="24" height="24" fill="#c4c4c4"/><circle cx="12" cy="9.6" r="5.1" fill="#fff"/><path d="M3 24 Q3.6 15 12 14.9 Q20.4 15 21 24 Z" fill="#fff"/></g>
<text x="1597.0" y="196.2" text-anchor="middle" font-family="Liberation Sans" font-weight="bold" font-size="4.1" fill="#f8f8f8" stroke="#161616" stroke-width="0.8" paint-order="stroke" letter-spacing="-0.12">Ginger Baker</text>
<rect x="921.5" y="215.5" width="25" height="25" fill="#141414" opacity="0.6"/>
<g transform="translate(922.0 216.0)"><rect x="0" y="0" width="24" height="24" fill="#c4c4c4"/><circle cx="12" cy="9.6" r="5.1" fill="#fff"/><path d="M3 24 Q3.6 15 12 14.9 Q20.4 15 21 24 Z" fill="#fff"/></g>
<text x="934.0" y="244.2" text-anchor="middle" font-family="Liberation Sans" font-weight="bold" font-size="4.1" fill="#f8f8f8" stroke="#161616" stroke-width="0.8" paint-order="stroke" letter-spacing="-0.12">Bill Wyman</text>
<circle cx="962.5" cy="228.0" r="11.8" fill="#46b6e0"/>
<path d="M955.5 223.9h13.9" stroke="#fff" stroke-width="0.8" opacity="0.68"/><path d="M956.9 226.9h11.3" stroke="#fff" stroke-width="0.7" opacity="0.38"/><path d="M959.6 229.3h5.7" stroke="#fff" stroke-width="0.7" opacity="0.38"/>
<circle cx="1212.8" cy="228.0" r="11.8" fill="#46b6e0"/>
<path d="M1206.2 225.1h13.2" stroke="#fff" stroke-width="0.8" opacity="0.68"/><path d="M1210.5 228.1h4.6" stroke="#fff" stroke-width="0.7" opacity="0.38"/>
<rect x="1317.0" y="215.5" width="25" height="25" fill="#141414" opacity="0.6"/>
<g transform="translate(1317.5 216.0)"><rect x="0" y="0" width="24" height="24" fill="#c4c4c4"/><circle cx="12" cy="9.6" r="5.1" fill="#fff"/><path d="M3 24 Q3.6 15 12 14.9 Q20.4 15 21 24 Z" fill="#fff"/></g>
<text x="1329.5" y="244.2" text-anchor="middle" font-family="Liberation Sans" font-weight="bold" font-size="4.1" fill="#f8f8f8" stroke="#161616" stroke-width="0.8" paint-order="stroke" letter-spacing="-0.12">Mick Jagger</text>
<circle cx="1358.0" cy="228.0" r="11.8" fill="#46b6e0"/>
<path d="M1351.4 220.3h13.1" stroke="#fff" stroke-width="0.8" opacity="0.68"/><path d="M1352.7 223.3h10.6" stroke="#fff" stroke-width="0.7" opacity="0.38"/><path d="M1355.5 225.7h5.0" stroke="#fff" stroke-width="0.7" opacity="0.38"/><path d="M1355.1 228.1h5.8" stroke="#fff" stroke-width="0.7" opacity="0.38"/><path d="M1353.5 230.5h9.0" stroke="#fff" stroke-width="0.7" opacity="0.38"/><path d="M1352.2 232.9h11.6" stroke="#fff" stroke-width="0.7" opacity="0.38"/>
<rect x="1399.9" y="215.5" width="25" height="25" fill="#141414" opacity="0.6"/>
<g transform="translate(1400.4 216.0)"><rect x="0" y="0" width="24" height="24" fill="#c4c4c4"/><circle cx="12" cy="9.6" r="5.1" fill="#fff"/><path d="M3 24 Q3.6 15 12 14.9 Q20.4 15 21 24 Z" fill="#fff"/></g>
<text x="1412.4" y="244.2" text-anchor="middle" font-family="Liberation Sans" font-weight="bold" font-size="4.1" fill="#f8f8f8" stroke="#161616" stroke-width="0.8" paint-order="stroke" letter-spacing="-0.12">Jack Bruce</text>
<rect x="1428.5" y="215.5" width="25" height="25" fill="#141414" opacity="0.6"/>
<g transform="translate(1429.0 216.0)"><rect x="0" y="0" width="24" height="24" fill="#c4c4c4"/><circle cx="12" cy="9.6" r="5.1" fill="#fff"/><path d="M3 24 Q3.6 15 12 14.9 Q20.4 15 21 24 Z" fill="#fff"/></g>
<text x="1441.0" y="244.2" text-anchor="middle" font-family="Liberation Sans" font-weight="bold" font-size="4.1" fill="#f8f8f8" stroke="#161616" stroke-width="0.8" paint-order="stroke" letter-spacing="-0.12">Jack Bruce</text>
<rect x="1456.9" y="215.5" width="25" height="25" fill="#141414" opacity="0.6"/>
<g transform="translate(1457.4 216.0)"><rect x="0" y="0" width="24" height="24" fill="#c4c4c4"/><circle cx="12" cy="9.6" r="5.1" fill="#fff"/><path d="M3 24 Q3.6 15 12 14.9 Q20.4 15 21 24 Z" fill="#fff"/></g>
<text x="1469.4" y="244.2" text-anchor="middle" font-family="Liberation Sans" font-weight="bold" font-size="4.1" fill="#f8f8f8" stroke="#161616" stroke-width="0.8" paint-order="stroke" letter-spacing="-0.12">Kurt Cobain</text>
<rect x="1485.5" y="215.5" width="25" height="25" fill="#141414" opacity="0.6"/>
<g transform="translate(1486.0 216.0)"><rect x="0" y="0" width="24" height="24" fill="#c4c4c4"/><circle cx="12" cy="9.6" r="5.1" fill="#fff"/><path d="M3 24 Q3.6 15 12 14.9 Q20.4 15 21 24 Z" fill="#fff"/></g>
<text x="1498.0" y="244.2" text-anchor="middle" font-family="Liberation Sans" font-weight="bold" font-size="4.1" fill="#f8f8f8" stroke="#161616" stroke-width="0.8" paint-order="stroke" letter-spacing="-0.12">Ronnie Wood</text>
<circle cx="1562.8" cy="228.0" r="11.8" fill="#46b6e0"/>
<path d="M1557.2 225.1h11.2" stroke="#fff" stroke-width="0.8" opacity="0.68"/><path d="M1557.4 228.1h10.9" stroke="#fff" stroke-width="0.7" opacity="0.38"/>
<circle cx="1597.3" cy="228.0" r="11.8" fill="#46b6e0"/>
<path d="M1590.8 225.1h13.1" stroke="#fff" stroke-width="0.8" opacity="0.68"/><path d="M1593.1 228.1h8.3" stroke="#fff" stroke-width="0.7" opacity="0.38"/>
<rect x="1716.5" y="215.5" width="25" height="25" fill="#141414" opacity="0.6"/>
<g transform="translate(1717.0 216.0)"><rect x="0" y="0" width="24" height="24" fill="#c4c4c4"/><circle cx="12" cy="9.6" r="5.1" fill="#fff"/><path d="M3 24 Q3.6 15 12 14.9 Q20.4 15 21 24 Z" fill="#fff"/></g>
<text x="1729.0" y="244.2" text-anchor="middle" font-family="Liberation Sans" font-weight="bold" font-size="4.1" fill="#f8f8f8" stroke="#161616" stroke-width="0.8" paint-order="stroke" letter-spacing="-0.12">Jack Bruce</text>
<circle cx="934.0" cy="275.5" r="11.8" fill="#46b6e0"/>
<path d="M927.1 272.6h13.8" stroke="#fff" stroke-width="0.8" opacity="0.68"/><path d="M929.3 275.6h9.5" stroke="#fff" stroke-width="0.7" opacity="0.38"/>
<circle cx="962.0" cy="275.5" r="11.8" fill="#46b6e0"/>
<path d="M955.0 272.6h13.9" stroke="#fff" stroke-width="0.8" opacity="0.68"/><path d="M957.4 275.6h9.1" stroke="#fff" stroke-width="0.7" opacity="0.38"/>
<rect x="983.5" y="263.0" width="25" height="25" fill="#141414" opacity="0.6"/>
<g transform="translate(984.0 263.5)"><rect x="0" y="0" width="24" height="24" fill="#c4c4c4"/><circle cx="12" cy="9.6" r="5.1" fill="#fff"/><path d="M3 24 Q3.6 15 12 14.9 Q20.4 15 21 24 Z" fill="#fff"/></g>
<text x="996.0" y="291.7" text-anchor="middle" font-family="Liberation Sans" font-weight="bold" font-size="4.1" fill="#f8f8f8" stroke="#161616" stroke-width="0.8" paint-order="stroke" letter-spacing="-0.12">Dave Grohl</text>
<rect x="1011.5" y="263.0" width="25" height="25" fill="#141414" opacity="0.6"/>
<g transform="translate(1012.0 263.5)"><rect x="0" y="0" width="24" height="24" fill="#c4c4c4"/><circle cx="12" cy="9.6" r="5.1" fill="#fff"/><path d="M3 24 Q3.6 15 12 14.9 Q20.4 15 21 24 Z" fill="#fff"/></g>
<text x="1024.0" y="291.7" text-anchor="middle" font-family="Liberation Sans" font-weight="bold" font-size="4.1" fill="#f8f8f8" stroke="#161616" stroke-width="0.8" paint-order="stroke" letter-spacing="-0.12">Bill Wyman</text>
<rect x="1040.2" y="263.0" width="25" height="25" fill="#141414" opacity="0.6"/>
<g transform="translate(1040.7 263.5)"><rect x="0" y="0" width="24" height="24" fill="#c4c4c4"/><circle cx="12" cy="9.6" r="5.1" fill="#fff"/><path d="M3 24 Q3.6 15 12 14.9 Q20.4 15 21 24 Z" fill="#fff"/></g>
<text x="1052.7" y="291.7" text-anchor="middle" font-family="Liberation Sans" font-weight="bold" font-size="4.1" fill="#f8f8f8" stroke="#161616" stroke-width="0.8" paint-order="stroke" letter-spacing="-0.12">Ginger Baker</text>
<rect x="1068.5" y="263.0" width="25" height="25" fill="#141414" opacity="0.6"/>
<g transform="translate(1069.0 263.5)"><rect x="0" y="0" width="24" height="24" fill="#c4c4c4"/><circle cx="12" cy="9.6" r="5.1" fill="#fff"/><path d="M3 24 Q3.6 15 12 14.9 Q20.4 15 21 24 Z" fill="#fff"/></g>
<text x="1081.0" y="291.7" text-anchor="middle" font-family="Liberation Sans" font-weight="bold" font-size="4.1" fill="#f8f8f8" stroke="#161616" stroke-width="0.8" paint-order="stroke" letter-spacing="-0.12">Brian May</text>
<rect x="1097.3" y="263.0" width="25" height="25" fill="#141414" opacity="0.6"/>
<g transform="translate(1097.8 263.5)"><rect x="0" y="0" width="24" height="24" fill="#c4c4c4"/><circle cx="12" cy="9.6" r="5.1" fill="#fff"/><path d="M3 24 Q3.6 15 12 14.9 Q20.4 15 21 24 Z" fill="#fff"/></g>
<text x="1109.8" y="291.7" text-anchor="middle" font-family="Liberation Sans" font-weight="bold" font-size="4.1" fill="#f8f8f8" stroke="#161616" stroke-width="0.8" paint-order="stroke" letter-spacing="-0.12">Mick Jagger</text>
<circle cx="1212.8" cy="275.5" r="11.8" fill="#46b6e0"/>
<path d="M1205.8 272.6h14.1" stroke="#fff" stroke-width="0.8" opacity="0.68"/><path d="M1208.8 275.6h8.0" stroke="#fff" stroke-width="0.7" opacity="0.38"/>
<rect x="1303.0" y="263.0" width="25" height="25" fill="#141414" opacity="0.6"/>
<g transform="translate(1303.5 263.5)"><rect width="24" height="24" fill="#cfcfcf"/><path d="M2 24Q1 2 12 2Q23 2 22 24Z" fill="#262626"/><ellipse cx="12" cy="12" rx="4" ry="5.5" fill="#8c8c8c"/></g>
<text x="1315.5" y="291.7" text-anchor="middle" font-family="Liberation Sans" font-weight="bold" font-size="4.1" fill="#f8f8f8" stroke="#161616" stroke-width="0.8" paint-order="stroke" letter-spacing="-0.12">Ginger Baker</text>
<circle cx="1353.0" cy="275.5" r="11.8" fill="#46b6e0"/>
<path d="M1345.6 271.4h14.9" stroke="#fff" stroke-width="0.8" opacity="0.68"/><path d="M1349.1 274.4h7.7" stroke="#fff" stroke-width="0.7" opacity="0.38"/><path d="M1347.3 276.8h11.4" stroke="#fff" stroke-width="0.7" opacity="0.38"/>
<circle cx="1443.8" cy="275.5" r="11.8" fill="#46b6e0"/>
<path d="M1437.6 271.4h12.5" stroke="#fff" stroke-width="0.8" opacity="0.68"/><path d="M1438.6 274.4h10.4" stroke="#fff" stroke-width="0.7" opacity="0.38"/><path d="M1439.0 276.8h9.6" stroke="#fff" stroke-width="0.7" opacity="0.38"/>
<circle cx="1569.0" cy="275.5" r="11.8" fill="#46b6e0"/>
<path d="M1563.3 272.6h11.4" stroke="#fff" stroke-width="0.8" opacity="0.68"/><path d="M1565.8 275.6h6.4" stroke="#fff" stroke-width="0.7" opacity="0.38"/>
<rect x="1584.5" y="263.0" width="25" height="25" fill="#141414" opacity="0.6"/>
<g transform="translate(1585.0 263.5)"><rect x="0" y="0" width="24" height="24" fill="#c4c4c4"/><circle cx="12" cy="9.6" r="5.1" fill="#fff"/><path d="M3 24 Q3.6 15 12 14.9 Q20.4 15 21 24 Z" fill="#fff"/></g>
<text x="1597.0" y="291.7" text-anchor="middle" font-family="Liberation Sans" font-weight="bold" font-size="4.1" fill="#f8f8f8" stroke="#161616" stroke-width="0.8" paint-order="stroke" letter-spacing="-0.12">Robert Plant</text>
<rect x="1613.5" y="263.0" width="25" height="25" fill="#141414" opacity="0.6"/>
<g transform="translate(1614.0 263.5)"><rect x="0" y="0" width="24" height="24" fill="#c4c4c4"/><circle cx="12" cy="9.6" r="5.1" fill="#fff"/><path d="M3 24 Q3.6 15 12 14.9 Q20.4 15 21 24 Z" fill="#fff"/></g>
<text x="1626.0" y="291.7" text-anchor="middle" font-family="Liberation Sans" font-weight="bold" font-size="4.1" fill="#f8f8f8" stroke="#161616" stroke-width="0.8" paint-order="stroke" letter-spacing="-0.12">Chad Smith</text>
<circle cx="1729.0" cy="275.5" r="11.8" fill="#46b6e0"/>
<path d="M1722.8 270.2h12.4" stroke="#fff" stroke-width="0.8" opacity="0.68"/><path d="M1723.1 273.2h11.8" stroke="#fff" stroke-width="0.7" opacity="0.38"/><path d="M1726.5 275.6h4.9" stroke="#fff" stroke-width="0.7" opacity="0.38"/><path d="M1725.3 278.0h7.3" stroke="#fff" stroke-width="0.7" opacity="0.38"/>
<rect x="1745.2" y="263.0" width="25" height="25" fill="#141414" opacity="0.6"/>
<g transform="translate(1745.7 263.5)"><rect x="0" y="0" width="24" height="24" fill="#c4c4c4"/><circle cx="12" cy="9.6" r="5.1" fill="#fff"/><path d="M3 24 Q3.6 15 12 14.9 Q20.4 15 21 24 Z" fill="#fff"/></g>
<text x="1757.7" y="291.7" text-anchor="middle" font-family="Liberation Sans" font-weight="bold" font-size="4.1" fill="#f8f8f8" stroke="#161616" stroke-width="0.8" paint-order="stroke" letter-spacing="-0.12">John Deacon</text>
<rect x="887.0" y="318.5" width="25" height="25" fill="#141414" opacity="0.6"/>
<g transform="translate(887.5 319.0)"><rect x="0" y="0" width="24" height="24" fill="#c4c4c4"/><circle cx="12" cy="9.6" r="5.1" fill="#fff"/><path d="M3 24 Q3.6 15 12 14.9 Q20.4 15 21 24 Z" fill="#fff"/></g>
<text x="899.5" y="347.2" text-anchor="middle" font-family="Liberation Sans" font-weight="bold" font-size="4.1" fill="#f8f8f8" stroke="#161616" stroke-width="0.8" paint-order="stroke" letter-spacing="-0.12">Chad Smith</text>
<rect x="915.5" y="318.5" width="25" height="25" fill="#141414" opacity="0.6"/>
<g transform="translate(916.0 319.0)"><rect x="0" y="0" width="24" height="24" fill="#c4c4c4"/><circle cx="12" cy="9.6" r="5.1" fill="#fff"/><path d="M3 24 Q3.6 15 12 14.9 Q20.4 15 21 24 Z" fill="#fff"/></g>
<text x="928.0" y="347.2" text-anchor="middle" font-family="Liberation Sans" font-weight="bold" font-size="4.1" fill="#f8f8f8" stroke="#161616" stroke-width="0.8" paint-order="stroke" letter-spacing="-0.12">Ron Wood</text>
<circle cx="956.5" cy="331.0" r="11.8" fill="#46b6e0"/>
<path d="M949.9 325.7h13.1" stroke="#fff" stroke-width="0.8" opacity="0.68"/><path d="M950.7 328.7h11.7" stroke="#fff" stroke-width="0.7" opacity="0.38"/><path d="M954.2 331.1h4.6" stroke="#fff" stroke-width="0.7" opacity="0.38"/><path d="M952.3 333.5h8.5" stroke="#fff" stroke-width="0.7" opacity="0.38"/>
<circle cx="996.0" cy="331.0" r="11.8" fill="#46b6e0"/>
<path d="M989.6 326.9h12.7" stroke="#fff" stroke-width="0.8" opacity="0.68"/><path d="M992.6 329.9h6.8" stroke="#fff" stroke-width="0.7" opacity="0.38"/><path d="M992.0 332.3h8.0" stroke="#fff" stroke-width="0.7" opacity="0.38"/>
<circle cx="1055.0" cy="331.0" r="11.8" fill="#46b6e0"/>
<path d="M1049.3 325.7h11.3" stroke="#fff" stroke-width="0.8" opacity="0.68"/><path d="M1052.6 328.7h4.7" stroke="#fff" stroke-width="0.7" opacity="0.38"/><path d="M1051.9 331.1h6.2" stroke="#fff" stroke-width="0.7" opacity="0.38"/><path d="M1050.2 333.5h9.6" stroke="#fff" stroke-width="0.7" opacity="0.38"/>
<circle cx="1212.8" cy="331.0" r="11.8" fill="#46b6e0"/>
<path d="M1207.1 328.1h11.3" stroke="#fff" stroke-width="0.8" opacity="0.68"/><path d="M1208.0 331.1h9.6" stroke="#fff" stroke-width="0.7" opacity="0.38"/>
<circle cx="1321.5" cy="331.0" r="11.8" fill="#46b6e0"/>
<path d="M1315.3 325.7h12.4" stroke="#fff" stroke-width="0.8" opacity="0.68"/><path d="M1318.0 328.7h7.1" stroke="#fff" stroke-width="0.7" opacity="0.38"/><path d="M1316.8 331.1h9.3" stroke="#fff" stroke-width="0.7" opacity="0.38"/><path d="M1319.4 333.5h4.2" stroke="#fff" stroke-width="0.7" opacity="0.38"/>
<circle cx="1350.0" cy="331.0" r="11.8" fill="#46b6e0"/>
<path d="M1343.6 325.7h12.8" stroke="#fff" stroke-width="0.8" opacity="0.68"/><path d="M1345.6 328.7h8.9" stroke="#fff" stroke-width="0.7" opacity="0.38"/><path d="M1346.0 331.1h7.9" stroke="#fff" stroke-width="0.7" opacity="0.38"/><path d="M1347.1 333.5h5.7" stroke="#fff" stroke-width="0.7" opacity="0.38"/>
<circle cx="1443.8" cy="331.0" r="11.8" fill="#46b6e0"/>
<path d="M1438.0 328.1h11.6" stroke="#fff" stroke-width="0.8" opacity="0.68"/><path d="M1440.8 331.1h6.0" stroke="#fff" stroke-width="0.7" opacity="0.38"/>
<circle cx="1503.6" cy="331.0" r="11.8" fill="#46b6e0"/>
<path d="M1495.8 326.9h15.6" stroke="#fff" stroke-width="0.8" opacity="0.68"/><path d="M1499.6 329.9h8.0" stroke="#fff" stroke-width="0.7" opacity="0.38"/><path d="M1500.9 332.3h5.3" stroke="#fff" stroke-width="0.7" opacity="0.38"/>
<rect x="1528.0" y="318.5" width="25" height="25" fill="#141414" opacity="0.6"/>
<g transform="translate(1528.5 319.0)"><rect x="0" y="0" width="24" height="24" fill="#c4c4c4"/><circle cx="12" cy="9.6" r="5.1" fill="#fff"/><path d="M3 24 Q3.6 15 12 14.9 Q20.4 15 21 24 Z" fill="#fff"/></g>
<text x="1540.5" y="347.2" text-anchor="middle" font-family="Liberation Sans" font-weight="bold" font-size="4.1" fill="#f8f8f8" stroke="#161616" stroke-width="0.8" paint-order="stroke" letter-spacing="-0.12">Kurt Cobain</text>
<rect x="1556.3" y="318.5" width="25" height="25" fill="#141414" opacity="0.6"/>
<g transform="translate(1556.8 319.0)"><rect x="0" y="0" width="24" height="24" fill="#c4c4c4"/><circle cx="12" cy="9.6" r="5.1" fill="#fff"/><path d="M3 24 Q3.6 15 12 14.9 Q20.4 15 21 24 Z" fill="#fff"/></g>
<text x="1568.8" y="347.2" text-anchor="middle" font-family="Liberation Sans" font-weight="bold" font-size="4.1" fill="#f8f8f8" stroke="#161616" stroke-width="0.8" paint-order="stroke" letter-spacing="-0.12">Ginger Baker</text>
<circle cx="1597.3" cy="331.0" r="11.8" fill="#46b6e0"/>
<path d="M1589.6 328.1h15.4" stroke="#fff" stroke-width="0.8" opacity="0.68"/><path d="M1592.0 331.1h10.6" stroke="#fff" stroke-width="0.7" opacity="0.38"/>
<circle cx="1729.0" cy="331.0" r="11.8" fill="#46b6e0"/>
<path d="M1722.8 323.3h12.4" stroke="#fff" stroke-width="0.8" opacity="0.68"/><path d="M1725.3 326.3h7.3" stroke="#fff" stroke-width="0.7" opacity="0.38"/><path d="M1725.6 328.7h6.9" stroke="#fff" stroke-width="0.7" opacity="0.38"/><path d="M1723.5 331.1h11.1" stroke="#fff" stroke-width="0.7" opacity="0.38"/><path d="M1723.2 333.5h11.7" stroke="#fff" stroke-width="0.7" opacity="0.38"/><path d="M1726.4 335.9h5.2" stroke="#fff" stroke-width="0.7" opacity="0.38"/>
<circle cx="1757.7" cy="331.0" r="11.8" fill="#46b6e0"/>
<path d="M1751.8 328.1h11.8" stroke="#fff" stroke-width="0.8" opacity="0.68"/><path d="M1753.1 331.1h9.3" stroke="#fff" stroke-width="0.7" opacity="0.38"/>
<circle cx="931.0" cy="378.5" r="11.8" fill="#46b6e0"/>
<path d="M924.3 375.6h13.4" stroke="#fff" stroke-width="0.8" opacity="0.68"/><path d="M926.6 378.6h8.7" stroke="#fff" stroke-width="0.7" opacity="0.38"/>
<circle cx="1042.7" cy="378.5" r="11.8" fill="#46b6e0"/>
<path d="M1036.5 375.6h12.4" stroke="#fff" stroke-width="0.8" opacity="0.68"/><path d="M1040.1 378.6h5.2" stroke="#fff" stroke-width="0.7" opacity="0.38"/>
<circle cx="1079.0" cy="378.5" r="11.8" fill="#46b6e0"/>
<path d="M1072.6 370.8h12.8" stroke="#fff" stroke-width="0.8" opacity="0.68"/><path d="M1074.7 373.8h8.5" stroke="#fff" stroke-width="0.7" opacity="0.38"/><path d="M1073.2 376.2h11.6" stroke="#fff" stroke-width="0.7" opacity="0.38"/><path d="M1074.2 378.6h9.5" stroke="#fff" stroke-width="0.7" opacity="0.38"/><path d="M1074.9 381.0h8.1" stroke="#fff" stroke-width="0.7" opacity="0.38"/><path d="M1074.5 383.4h8.9" stroke="#fff" stroke-width="0.7" opacity="0.38"/>
<circle cx="1330.3" cy="378.5" r="11.8" fill="#46b6e0"/>
<path d="M1323.7 375.6h13.3" stroke="#fff" stroke-width="0.8" opacity="0.68"/><path d="M1324.8 378.6h11.0" stroke="#fff" stroke-width="0.7" opacity="0.38"/>
<circle cx="1446.7" cy="378.5" r="11.8" fill="#46b6e0"/>
<path d="M1440.2 370.8h13.0" stroke="#fff" stroke-width="0.8" opacity="0.68"/><path d="M1443.1 373.8h7.2" stroke="#fff" stroke-width="0.7" opacity="0.38"/><path d="M1444.3 376.2h4.8" stroke="#fff" stroke-width="0.7" opacity="0.38"/><path d="M1442.2 378.6h9.1" stroke="#fff" stroke-width="0.7" opacity="0.38"/><path d="M1444.5 381.0h4.5" stroke="#fff" stroke-width="0.7" opacity="0.38"/><path d="M1444.4 383.4h4.5" stroke="#fff" stroke-width="0.7" opacity="0.38"/>
<circle cx="1475.2" cy="378.5" r="11.8" fill="#46b6e0"/>
<path d="M1468.6 375.6h13.2" stroke="#fff" stroke-width="0.8" opacity="0.68"/><path d="M1472.8 378.6h4.9" stroke="#fff" stroke-width="0.7" opacity="0.38"/>
<circle cx="1503.6" cy="378.5" r="11.8" fill="#46b6e0"/>
<path d="M1497.8 375.6h11.5" stroke="#fff" stroke-width="0.8" opacity="0.68"/><path d="M1499.3 378.6h8.5" stroke="#fff" stroke-width="0.7" opacity="0.38"/>
<circle cx="1569.0" cy="378.5" r="11.8" fill="#46b6e0"/>
<path d="M1563.2 370.8h11.5" stroke="#fff" stroke-width="0.8" opacity="0.68"/><path d="M1565.5 373.8h6.9" stroke="#fff" stroke-width="0.7" opacity="0.38"/><path d="M1566.9 376.2h4.2" stroke="#fff" stroke-width="0.7" opacity="0.38"/><path d="M1563.5 378.6h11.0" stroke="#fff" stroke-width="0.7" opacity="0.38"/><path d="M1564.5 381.0h8.9" stroke="#fff" stroke-width="0.7" opacity="0.38"/><path d="M1566.4 383.4h5.2" stroke="#fff" stroke-width="0.7" opacity="0.38"/>
<circle cx="1751.6" cy="378.5" r="11.8" fill="#46b6e0"/>
<path d="M1743.7 375.6h15.8" stroke="#fff" stroke-width="0.8" opacity="0.68"/><path d="M1747.2 378.6h8.8" stroke="#fff" stroke-width="0.7" opacity="0.38"/>
<circle cx="931.0" cy="426.0" r="11.8" fill="#46b6e0"/>
<path d="M925.2 420.7h11.6" stroke="#fff" stroke-width="0.8" opacity="0.68"/><path d="M925.6 423.7h10.8" stroke="#fff" stroke-width="0.7" opacity="0.38"/><path d="M925.0 426.1h11.9" stroke="#fff" stroke-width="0.7" opacity="0.38"/><path d="M927.1 428.5h7.7" stroke="#fff" stroke-width="0.7" opacity="0.38"/>
<rect x="952.8" y="413.5" width="25" height="25" fill="#141414" opacity="0.6"/>
<g transform="translate(953.3 414.0)"><rect x="0" y="0" width="24" height="24" fill="#c4c4c4"/><circle cx="12" cy="9.6" r="5.1" fill="#fff"/><path d="M3 24 Q3.6 15 12 14.9 Q20.4 15 21 24 Z" fill="#fff"/></g>
<text x="965.3" y="442.2" text-anchor="middle" font-family="Liberation Sans" font-weight="bold" font-size="4.1" fill="#f8f8f8" stroke="#161616" stroke-width="0.8" paint-order="stroke" letter-spacing="-0.12">Robert Plant</text>
<circle cx="993.8" cy="426.0" r="11.8" fill="#46b6e0"/>
<path d="M988.1 423.1h11.4" stroke="#fff" stroke-width="0.8" opacity="0.68"/><path d="M991.4 426.1h4.8" stroke="#fff" stroke-width="0.7" opacity="0.38"/>
<circle cx="1050.6" cy="426.0" r="11.8" fill="#46b6e0"/>
<path d="M1043.2 421.9h14.7" stroke="#fff" stroke-width="0.8" opacity="0.68"/><path d="M1046.7 424.9h7.8" stroke="#fff" stroke-width="0.7" opacity="0.38"/><path d="M1045.8 427.3h9.5" stroke="#fff" stroke-width="0.7" opacity="0.38"/>
<circle cx="1079.0" cy="426.0" r="11.8" fill="#46b6e0"/>
<path d="M1073.4 418.3h11.1" stroke="#fff" stroke-width="0.8" opacity="0.68"/><path d="M1073.2 421.3h11.6" stroke="#fff" stroke-width="0.7" opacity="0.38"/><path d="M1074.9 423.7h8.2" stroke="#fff" stroke-width="0.7" opacity="0.38"/><path d="M1076.4 426.1h5.2" stroke="#fff" stroke-width="0.7" opacity="0.38"/><path d="M1074.8 428.5h8.3" stroke="#fff" stroke-width="0.7" opacity="0.38"/><path d="M1076.9 430.9h4.2" stroke="#fff" stroke-width="0.7" opacity="0.38"/>
<circle cx="1426.7" cy="426.0" r="11.8" fill="#46b6e0"/>
<path d="M1420.5 418.3h12.5" stroke="#fff" stroke-width="0.8" opacity="0.68"/><path d="M1422.1 421.3h9.1" stroke="#fff" stroke-width="0.7" opacity="0.38"/><path d="M1424.3 423.7h4.7" stroke="#fff" stroke-width="0.7" opacity="0.38"/><path d="M1421.3 426.1h10.8" stroke="#fff" stroke-width="0.7" opacity="0.38"/><path d="M1422.6 428.5h8.1" stroke="#fff" stroke-width="0.7" opacity="0.38"/><path d="M1421.1 430.9h11.3" stroke="#fff" stroke-width="0.7" opacity="0.38"/>
<circle cx="1455.0" cy="426.0" r="11.8" fill="#46b6e0"/>
<path d="M1447.6 421.9h14.9" stroke="#fff" stroke-width="0.8" opacity="0.68"/><path d="M1450.9 424.9h8.3" stroke="#fff" stroke-width="0.7" opacity="0.38"/><path d="M1449.9 427.3h10.2" stroke="#fff" stroke-width="0.7" opacity="0.38"/>
<circle cx="1503.6" cy="426.0" r="11.8" fill="#46b6e0"/>
<path d="M1496.5 421.9h14.2" stroke="#fff" stroke-width="0.8" opacity="0.68"/><path d="M1499.1 424.9h8.9" stroke="#fff" stroke-width="0.7" opacity="0.38"/><path d="M1498.4 427.3h10.3" stroke="#fff" stroke-width="0.7" opacity="0.38"/>
<circle cx="1574.7" cy="426.0" r="11.8" fill="#46b6e0"/>
<path d="M1567.2 423.1h15.0" stroke="#fff" stroke-width="0.8" opacity="0.68"/><path d="M1569.4 426.1h10.5" stroke="#fff" stroke-width="0.7" opacity="0.38"/>
<circle cx="1745.7" cy="426.0" r="11.8" fill="#46b6e0"/>
<path d="M1739.7 423.1h12.0" stroke="#fff" stroke-width="0.8" opacity="0.68"/><path d="M1741.7 426.1h7.9" stroke="#fff" stroke-width="0.7" opacity="0.38"/>
<circle cx="1774.1" cy="426.0" r="11.8" fill="#46b6e0"/>
<path d="M1766.1 423.1h15.9" stroke="#fff" stroke-width="0.8" opacity="0.68"/><path d="M1768.9 426.1h10.3" stroke="#fff" stroke-width="0.7" opacity="0.38"/>
<circle cx="908.4" cy="473.0" r="11.8" fill="#46b6e0"/>
<path d="M902.3 467.7h12.3" stroke="#fff" stroke-width="0.8" opacity="0.68"/><path d="M903.6 470.7h9.5" stroke="#fff" stroke-width="0.7" opacity="0.38"/><path d="M902.6 473.1h11.7" stroke="#fff" stroke-width="0.7" opacity="0.38"/><path d="M904.6 475.5h7.6" stroke="#fff" stroke-width="0.7" opacity="0.38"/>
<circle cx="936.8" cy="473.0" r="11.8" fill="#46b6e0"/>
<path d="M928.9 468.9h15.8" stroke="#fff" stroke-width="0.8" opacity="0.68"/><path d="M933.3 471.9h6.9" stroke="#fff" stroke-width="0.7" opacity="0.38"/><path d="M933.9 474.3h5.8" stroke="#fff" stroke-width="0.7" opacity="0.38"/>
<circle cx="965.4" cy="473.0" r="11.8" fill="#46b6e0"/>
<path d="M958.7 470.1h13.4" stroke="#fff" stroke-width="0.8" opacity="0.68"/><path d="M962.0 473.1h6.7" stroke="#fff" stroke-width="0.7" opacity="0.38"/>
<circle cx="993.8" cy="473.0" r="11.8" fill="#46b6e0"/>
<path d="M986.7 467.7h14.1" stroke="#fff" stroke-width="0.8" opacity="0.68"/><path d="M988.2 470.7h11.2" stroke="#fff" stroke-width="0.7" opacity="0.38"/><path d="M988.4 473.1h10.7" stroke="#fff" stroke-width="0.7" opacity="0.38"/><path d="M989.9 475.5h7.8" stroke="#fff" stroke-width="0.7" opacity="0.38"/>
<circle cx="1050.6" cy="473.0" r="11.8" fill="#46b6e0"/>
<path d="M1043.1 468.9h15.0" stroke="#fff" stroke-width="0.8" opacity="0.68"/><path d="M1048.3 471.9h4.7" stroke="#fff" stroke-width="0.7" opacity="0.38"/><path d="M1046.0 474.3h9.3" stroke="#fff" stroke-width="0.7" opacity="0.38"/>
<circle cx="1079.0" cy="473.0" r="11.8" fill="#46b6e0"/>
<path d="M1071.5 468.9h14.9" stroke="#fff" stroke-width="0.8" opacity="0.68"/><path d="M1074.0 471.9h10.0" stroke="#fff" stroke-width="0.7" opacity="0.38"/><path d="M1075.1 474.3h7.8" stroke="#fff" stroke-width="0.7" opacity="0.38"/>
<circle cx="1426.7" cy="473.0" r="11.8" fill="#46b6e0"/>
<path d="M1420.1 470.1h13.2" stroke="#fff" stroke-width="0.8" opacity="0.68"/><path d="M1422.2 473.1h9.1" stroke="#fff" stroke-width="0.7" opacity="0.38"/>
<circle cx="1460.8" cy="473.0" r="11.8" fill="#46b6e0"/>
<path d="M1453.3 470.1h15.0" stroke="#fff" stroke-width="0.8" opacity="0.68"/><path d="M1454.9 473.1h11.8" stroke="#fff" stroke-width="0.7" opacity="0.38"/>
<rect x="1476.8" y="460.5" width="25" height="25" fill="#141414" opacity="0.6"/>
<g transform="translate(1477.3 461.0)"><rect x="0" y="0" width="24" height="24" fill="#c4c4c4"/><circle cx="12" cy="9.6" r="5.1" fill="#fff"/><path d="M3 24 Q3.6 15 12 14.9 Q20.4 15 21 24 Z" fill="#fff"/></g>
<text x="1489.3" y="489.2" text-anchor="middle" font-family="Liberation Sans" font-weight="bold" font-size="4.1" fill="#f8f8f8" stroke="#161616" stroke-width="0.8" paint-order="stroke" letter-spacing="-0.12">Kurt Cobain</text>
<rect x="1505.2" y="460.5" width="25" height="25" fill="#141414" opacity="0.6"/>
<g transform="translate(1505.7 461.0)"><rect x="0" y="0" width="24" height="24" fill="#c4c4c4"/><circle cx="12" cy="9.6" r="5.1" fill="#fff"/><path d="M3 24 Q3.6 15 12 14.9 Q20.4 15 21 24 Z" fill="#fff"/></g>
<text x="1517.7" y="489.2" text-anchor="middle" font-family="Liberation Sans" font-weight="bold" font-size="4.1" fill="#f8f8f8" stroke="#161616" stroke-width="0.8" paint-order="stroke" letter-spacing="-0.12">Jimmy Page</text>
<rect x="1533.7" y="460.5" width="25" height="25" fill="#141414" opacity="0.6"/>
<g transform="translate(1534.2 461.0)"><rect x="0" y="0" width="24" height="24" fill="#c4c4c4"/><circle cx="12" cy="9.6" r="5.1" fill="#fff"/><path d="M3 24 Q3.6 15 12 14.9 Q20.4 15 21 24 Z" fill="#fff"/></g>
<text x="1546.2" y="489.2" text-anchor="middle" font-family="Liberation Sans" font-weight="bold" font-size="4.1" fill="#f8f8f8" stroke="#161616" stroke-width="0.8" paint-order="stroke" letter-spacing="-0.12">Kurt Cobain</text>
<circle cx="1574.7" cy="473.0" r="11.8" fill="#46b6e0"/>
<path d="M1567.4 470.1h14.6" stroke="#fff" stroke-width="0.8" opacity="0.68"/><path d="M1572.0 473.1h5.4" stroke="#fff" stroke-width="0.7" opacity="0.38"/>
<rect x="1590.3" y="460.5" width="25" height="25" fill="#141414" opacity="0.6"/>
<g transform="translate(1590.8 461.0)"><rect x="0" y="0" width="24" height="24" fill="#c4c4c4"/><circle cx="12" cy="9.6" r="5.1" fill="#fff"/><path d="M3 24 Q3.6 15 12 14.9 Q20.4 15 21 24 Z" fill="#fff"/></g>
<text x="1602.8" y="489.2" text-anchor="middle" font-family="Liberation Sans" font-weight="bold" font-size="4.1" fill="#f8f8f8" stroke="#161616" stroke-width="0.8" paint-order="stroke" letter-spacing="-0.12">Ron Wood</text>
<rect x="1619.4" y="460.5" width="25" height="25" fill="#141414" opacity="0.6"/>
<g transform="translate(1619.9 461.0)"><rect x="0" y="0" width="24" height="24" fill="#c4c4c4"/><circle cx="12" cy="9.6" r="5.1" fill="#fff"/><path d="M3 24 Q3.6 15 12 14.9 Q20.4 15 21 24 Z" fill="#fff"/></g>
<text x="1631.9" y="489.2" text-anchor="middle" font-family="Liberation Sans" font-weight="bold" font-size="4.1" fill="#f8f8f8" stroke="#161616" stroke-width="0.8" paint-order="stroke" letter-spacing="-0.12">Bjorn Ulvaeus</text>
<rect x="1647.7" y="460.5" width="25" height="25" fill="#141414" opacity="0.6"/>
<g transform="translate(1648.2 461.0)"><rect x="0" y="0" width="24" height="24" fill="#c4c4c4"/><circle cx="12" cy="9.6" r="5.1" fill="#fff"/><path d="M3 24 Q3.6 15 12 14.9 Q20.4 15 21 24 Z" fill="#fff"/></g>
<text x="1660.2" y="489.2" text-anchor="middle" font-family="Liberation Sans" font-weight="bold" font-size="4.1" fill="#f8f8f8" stroke="#161616" stroke-width="0.8" paint-order="stroke" letter-spacing="-0.12">Ron Wood</text>
<rect x="1676.5" y="460.5" width="25" height="25" fill="#141414" opacity="0.6"/>
<g transform="translate(1677.0 461.0)"><rect x="0" y="0" width="24" height="24" fill="#c4c4c4"/><circle cx="12" cy="9.6" r="5.1" fill="#fff"/><path d="M3 24 Q3.6 15 12 14.9 Q20.4 15 21 24 Z" fill="#fff"/></g>
<text x="1689.0" y="489.2" text-anchor="middle" font-family="Liberation Sans" font-weight="bold" font-size="4.1" fill="#f8f8f8" stroke="#161616" stroke-width="0.8" paint-order="stroke" letter-spacing="-0.12">Jack Bruce</text>
<rect x="1704.8" y="460.5" width="25" height="25" fill="#141414" opacity="0.6"/>
<g transform="translate(1705.3 461.0)"><rect x="0" y="0" width="24" height="24" fill="#c4c4c4"/><circle cx="12" cy="9.6" r="5.1" fill="#fff"/><path d="M3 24 Q3.6 15 12 14.9 Q20.4 15 21 24 Z" fill="#fff"/></g>
<text x="1717.3" y="489.2" text-anchor="middle" font-family="Liberation Sans" font-weight="bold" font-size="4.1" fill="#f8f8f8" stroke="#161616" stroke-width="0.8" paint-order="stroke" letter-spacing="-0.12">Jimmy Page</text>
<rect x="1733.5" y="460.5" width="25" height="25" fill="#141414" opacity="0.6"/>
<g transform="translate(1734.0 461.0)"><rect width="24" height="24" fill="#0e0e0e"/><ellipse cx="14" cy="4" rx="2" ry="2.6" fill="#7a7a7a"/><path d="M1.5 13L8 6.5L15 8L17 13L14 17L7 18Z" fill="#bfe6f7"/><path d="M11 19L13 24H10Z" fill="#555"/><path d="M15 19L17 24H14Z" fill="#666"/><circle cx="1" cy="1" r="0.6" fill="#1a2a88"/><circle cx="3" cy="3" r="0.6" fill="#1a2a88"/></g>
<text x="1746.0" y="489.2" text-anchor="middle" font-family="Liberation Sans" font-weight="bold" font-size="4.1" fill="#f8f8f8" stroke="#161616" stroke-width="0.8" paint-order="stroke" letter-spacing="-0.12">Peter Gabriel</text>
<circle cx="1774.0" cy="473.0" r="11.8" fill="#46b6e0"/>
<path d="M1767.0 470.1h14.1" stroke="#fff" stroke-width="0.8" opacity="0.68"/><path d="M1769.6 473.1h8.8" stroke="#fff" stroke-width="0.7" opacity="0.38"/>
<rect x="924.5" y="508.2" width="25" height="25" fill="#141414" opacity="0.6"/>
<g transform="translate(925.0 508.7)"><rect x="0" y="0" width="24" height="24" fill="#c4c4c4"/><circle cx="12" cy="9.6" r="5.1" fill="#fff"/><path d="M3 24 Q3.6 15 12 14.9 Q20.4 15 21 24 Z" fill="#fff"/></g>
<text x="937.0" y="536.9" text-anchor="middle" font-family="Liberation Sans" font-weight="bold" font-size="4.1" fill="#f8f8f8" stroke="#161616" stroke-width="0.8" paint-order="stroke" letter-spacing="-0.12">Robert Plant</text>
<circle cx="965.4" cy="520.7" r="11.8" fill="#46b6e0"/>
<path d="M959.5 516.6h11.8" stroke="#fff" stroke-width="0.8" opacity="0.68"/><path d="M961.2 519.6h8.4" stroke="#fff" stroke-width="0.7" opacity="0.38"/><path d="M963.3 522.0h4.2" stroke="#fff" stroke-width="0.7" opacity="0.38"/>
<circle cx="993.8" cy="520.7" r="11.8" fill="#46b6e0"/>
<path d="M987.0 517.8h13.6" stroke="#fff" stroke-width="0.8" opacity="0.68"/><path d="M988.1 520.8h11.5" stroke="#fff" stroke-width="0.7" opacity="0.38"/>
<circle cx="1050.6" cy="520.7" r="11.8" fill="#46b6e0"/>
<path d="M1042.6 516.6h15.9" stroke="#fff" stroke-width="0.8" opacity="0.68"/><path d="M1047.8 519.6h5.6" stroke="#fff" stroke-width="0.7" opacity="0.38"/><path d="M1045.1 522.0h11.0" stroke="#fff" stroke-width="0.7" opacity="0.38"/>
<circle cx="1079.0" cy="520.7" r="11.8" fill="#46b6e0"/>
<path d="M1072.9 517.8h12.3" stroke="#fff" stroke-width="0.8" opacity="0.68"/><path d="M1075.8 520.8h6.3" stroke="#fff" stroke-width="0.7" opacity="0.38"/>
<rect x="1248.8" y="508.2" width="25" height="25" fill="#141414" opacity="0.6"/>
<g transform="translate(1249.3 508.7)"><rect x="0" y="0" width="24" height="24" fill="#c4c4c4"/><circle cx="12" cy="9.6" r="5.1" fill="#fff"/><path d="M3 24 Q3.6 15 12 14.9 Q20.4 15 21 24 Z" fill="#fff"/></g>
<text x="1261.3" y="536.9" text-anchor="middle" font-family="Liberation Sans" font-weight="bold" font-size="4.1" fill="#f8f8f8" stroke="#161616" stroke-width="0.8" paint-order="stroke" letter-spacing="-0.12">Angus Young</text>
<rect x="1277.5" y="508.2" width="25" height="25" fill="#141414" opacity="0.6"/>
<g transform="translate(1278.0 508.7)"><rect x="0" y="0" width="24" height="24" fill="#c4c4c4"/><circle cx="12" cy="9.6" r="5.1" fill="#fff"/><path d="M3 24 Q3.6 15 12 14.9 Q20.4 15 21 24 Z" fill="#fff"/></g>
<text x="1290.0" y="536.9" text-anchor="middle" font-family="Liberation Sans" font-weight="bold" font-size="4.1" fill="#f8f8f8" stroke="#161616" stroke-width="0.8" paint-order="stroke" letter-spacing="-0.12">John Deacon</text>
<rect x="1305.8" y="508.2" width="25" height="25" fill="#141414" opacity="0.6"/>
<g transform="translate(1306.3 508.7)"><rect x="0" y="0" width="24" height="24" fill="#c4c4c4"/><circle cx="12" cy="9.6" r="5.1" fill="#fff"/><path d="M3 24 Q3.6 15 12 14.9 Q20.4 15 21 24 Z" fill="#fff"/></g>
<text x="1318.3" y="536.9" text-anchor="middle" font-family="Liberation Sans" font-weight="bold" font-size="4.1" fill="#f8f8f8" stroke="#161616" stroke-width="0.8" paint-order="stroke" letter-spacing="-0.12">Jack Bruce</text>
<rect x="1334.2" y="508.2" width="25" height="25" fill="#141414" opacity="0.6"/>
<g transform="translate(1334.7 508.7)"><rect x="0" y="0" width="24" height="24" fill="#c4c4c4"/><circle cx="12" cy="9.6" r="5.1" fill="#fff"/><path d="M3 24 Q3.6 15 12 14.9 Q20.4 15 21 24 Z" fill="#fff"/></g>
<text x="1346.7" y="536.9" text-anchor="middle" font-family="Liberation Sans" font-weight="bold" font-size="4.1" fill="#f8f8f8" stroke="#161616" stroke-width="0.8" paint-order="stroke" letter-spacing="-0.12">Chad Smith</text>
<circle cx="1426.7" cy="520.7" r="11.8" fill="#46b6e0"/>
<path d="M1419.8 517.8h13.7" stroke="#fff" stroke-width="0.8" opacity="0.68"/><path d="M1421.4 520.8h10.7" stroke="#fff" stroke-width="0.7" opacity="0.38"/>
<circle cx="1455.0" cy="520.7" r="11.8" fill="#46b6e0"/>
<path d="M1447.2 517.8h15.6" stroke="#fff" stroke-width="0.8" opacity="0.68"/><path d="M1451.6 520.8h6.8" stroke="#fff" stroke-width="0.7" opacity="0.38"/>
<circle cx="1517.8" cy="520.7" r="11.8" fill="#46b6e0"/>
<path d="M1510.6 515.4h14.3" stroke="#fff" stroke-width="0.8" opacity="0.68"/><path d="M1512.5 518.4h10.5" stroke="#fff" stroke-width="0.7" opacity="0.38"/><path d="M1513.7 520.8h8.1" stroke="#fff" stroke-width="0.7" opacity="0.38"/><path d="M1512.5 523.2h10.6" stroke="#fff" stroke-width="0.7" opacity="0.38"/>
<circle cx="1634.7" cy="520.7" r="11.8" fill="#46b6e0"/>
<path d="M1628.9 513.0h11.7" stroke="#fff" stroke-width="0.8" opacity="0.68"/><path d="M1632.1 516.0h5.2" stroke="#fff" stroke-width="0.7" opacity="0.38"/><path d="M1630.7 518.4h8.1" stroke="#fff" stroke-width="0.7" opacity="0.38"/><path d="M1629.2 520.8h11.0" stroke="#fff" stroke-width="0.7" opacity="0.38"/><path d="M1629.6 523.2h10.2" stroke="#fff" stroke-width="0.7" opacity="0.38"/><path d="M1630.3 525.6h8.9" stroke="#fff" stroke-width="0.7" opacity="0.38"/>
<rect x="1682.3" y="508.2" width="25" height="25" fill="#141414" opacity="0.6"/>
<g transform="translate(1682.8 508.7)"><rect x="0" y="0" width="24" height="24" fill="#c4c4c4"/><circle cx="12" cy="9.6" r="5.1" fill="#fff"/><path d="M3 24 Q3.6 15 12 14.9 Q20.4 15 21 24 Z" fill="#fff"/></g>
<text x="1694.8" y="536.9" text-anchor="middle" font-family="Liberation Sans" font-weight="bold" font-size="4.1" fill="#f8f8f8" stroke="#161616" stroke-width="0.8" paint-order="stroke" letter-spacing="-0.12">John Deacon</text>
<circle cx="1723.2" cy="520.7" r="11.8" fill="#46b6e0"/>
<path d="M1717.3 517.8h11.9" stroke="#fff" stroke-width="0.8" opacity="0.68"/><path d="M1719.3 520.8h7.8" stroke="#fff" stroke-width="0.7" opacity="0.38"/>
<circle cx="1774.0" cy="520.7" r="11.8" fill="#46b6e0"/>
<path d="M1767.1 517.8h13.8" stroke="#fff" stroke-width="0.8" opacity="0.68"/><path d="M1770.7 520.8h6.6" stroke="#fff" stroke-width="0.7" opacity="0.38"/>
<circle cx="936.9" cy="568.5" r="11.8" fill="#46b6e0"/>
<path d="M930.1 560.8h13.7" stroke="#fff" stroke-width="0.8" opacity="0.68"/><path d="M933.0 563.8h7.9" stroke="#fff" stroke-width="0.7" opacity="0.38"/><path d="M931.8 566.2h10.2" stroke="#fff" stroke-width="0.7" opacity="0.38"/><path d="M931.4 568.6h11.1" stroke="#fff" stroke-width="0.7" opacity="0.38"/><path d="M934.7 571.0h4.5" stroke="#fff" stroke-width="0.7" opacity="0.38"/><path d="M934.1 573.4h5.5" stroke="#fff" stroke-width="0.7" opacity="0.38"/>
<circle cx="965.4" cy="568.5" r="11.8" fill="#46b6e0"/>
<path d="M958.0 565.6h14.9" stroke="#fff" stroke-width="0.8" opacity="0.68"/><path d="M961.4 568.6h8.1" stroke="#fff" stroke-width="0.7" opacity="0.38"/>
<circle cx="993.8" cy="568.5" r="11.8" fill="#46b6e0"/>
<path d="M988.2 560.8h11.1" stroke="#fff" stroke-width="0.8" opacity="0.68"/><path d="M988.2 563.8h11.2" stroke="#fff" stroke-width="0.7" opacity="0.38"/><path d="M991.5 566.2h4.5" stroke="#fff" stroke-width="0.7" opacity="0.38"/><path d="M990.5 568.6h6.6" stroke="#fff" stroke-width="0.7" opacity="0.38"/><path d="M987.9 571.0h11.8" stroke="#fff" stroke-width="0.7" opacity="0.38"/><path d="M989.4 573.4h8.8" stroke="#fff" stroke-width="0.7" opacity="0.38"/>
<circle cx="1022.4" cy="568.5" r="11.8" fill="#46b6e0"/>
<path d="M1015.2 565.6h14.5" stroke="#fff" stroke-width="0.8" opacity="0.68"/><path d="M1018.6 568.6h7.6" stroke="#fff" stroke-width="0.7" opacity="0.38"/>
<circle cx="1050.6" cy="568.5" r="11.8" fill="#46b6e0"/>
<path d="M1043.1 560.8h15.0" stroke="#fff" stroke-width="0.8" opacity="0.68"/><path d="M1046.6 563.8h8.1" stroke="#fff" stroke-width="0.7" opacity="0.38"/><path d="M1047.6 566.2h6.0" stroke="#fff" stroke-width="0.7" opacity="0.38"/><path d="M1046.5 568.6h8.2" stroke="#fff" stroke-width="0.7" opacity="0.38"/><path d="M1045.1 571.0h11.0" stroke="#fff" stroke-width="0.7" opacity="0.38"/><path d="M1044.9 573.4h11.4" stroke="#fff" stroke-width="0.7" opacity="0.38"/>
<circle cx="1088.2" cy="568.5" r="11.8" fill="#46b6e0"/>
<path d="M1080.5 560.8h15.5" stroke="#fff" stroke-width="0.8" opacity="0.68"/><path d="M1085.4 563.8h5.6" stroke="#fff" stroke-width="0.7" opacity="0.38"/><path d="M1084.4 566.2h7.6" stroke="#fff" stroke-width="0.7" opacity="0.38"/><path d="M1084.5 568.6h7.3" stroke="#fff" stroke-width="0.7" opacity="0.38"/><path d="M1084.6 571.0h7.1" stroke="#fff" stroke-width="0.7" opacity="0.38"/><path d="M1084.9 573.4h6.5" stroke="#fff" stroke-width="0.7" opacity="0.38"/>
<rect x="1104.5" y="556.0" width="25" height="25" fill="#141414" opacity="0.6"/>
<g transform="translate(1105.0 556.5)"><rect x="0" y="0" width="24" height="24" fill="#c4c4c4"/><circle cx="12" cy="9.6" r="5.1" fill="#fff"/><path d="M3 24 Q3.6 15 12 14.9 Q20.4 15 21 24 Z" fill="#fff"/></g>
<text x="1117.0" y="584.7" text-anchor="middle" font-family="Liberation Sans" font-weight="bold" font-size="4.1" fill="#f8f8f8" stroke="#161616" stroke-width="0.8" paint-order="stroke" letter-spacing="-0.12">Nick Mason</text>
<rect x="1132.7" y="556.0" width="25" height="25" fill="#141414" opacity="0.6"/>
<g transform="translate(1133.2 556.5)"><rect x="0" y="0" width="24" height="24" fill="#c4c4c4"/><circle cx="12" cy="9.6" r="5.1" fill="#fff"/><path d="M3 24 Q3.6 15 12 14.9 Q20.4 15 21 24 Z" fill="#fff"/></g>
<text x="1145.2" y="584.7" text-anchor="middle" font-family="Liberation Sans" font-weight="bold" font-size="4.1" fill="#f8f8f8" stroke="#161616" stroke-width="0.8" paint-order="stroke" letter-spacing="-0.12">Angus Young</text>
<rect x="1161.1" y="556.0" width="25" height="25" fill="#141414" opacity="0.6"/>
<g transform="translate(1161.6 556.5)"><rect x="0" y="0" width="24" height="24" fill="#c4c4c4"/><circle cx="12" cy="9.6" r="5.1" fill="#fff"/><path d="M3 24 Q3.6 15 12 14.9 Q20.4 15 21 24 Z" fill="#fff"/></g>
<text x="1173.6" y="584.7" text-anchor="middle" font-family="Liberation Sans" font-weight="bold" font-size="4.1" fill="#f8f8f8" stroke="#161616" stroke-width="0.8" paint-order="stroke" letter-spacing="-0.12">Eric Clapton</text>
<rect x="1189.8" y="556.0" width="25" height="25" fill="#141414" opacity="0.6"/>
<g transform="translate(1190.3 556.5)"><rect x="0" y="0" width="24" height="24" fill="#c4c4c4"/><circle cx="12" cy="9.6" r="5.1" fill="#fff"/><path d="M3 24 Q3.6 15 12 14.9 Q20.4 15 21 24 Z" fill="#fff"/></g>
<text x="1202.3" y="584.7" text-anchor="middle" font-family="Liberation Sans" font-weight="bold" font-size="4.1" fill="#f8f8f8" stroke="#161616" stroke-width="0.8" paint-order="stroke" letter-spacing="-0.12">Mick Jagger</text>
<circle cx="1315.6" cy="568.5" r="11.8" fill="#46b6e0"/>
<path d="M1308.4 565.6h14.3" stroke="#fff" stroke-width="0.8" opacity="0.68"/><path d="M1310.5 568.6h10.3" stroke="#fff" stroke-width="0.7" opacity="0.38"/>
<circle cx="1367.1" cy="568.5" r="11.8" fill="#46b6e0"/>
<path d="M1359.3 565.6h15.7" stroke="#fff" stroke-width="0.8" opacity="0.68"/><path d="M1362.5 568.6h9.1" stroke="#fff" stroke-width="0.7" opacity="0.38"/>
<circle cx="1457.7" cy="568.5" r="11.8" fill="#46b6e0"/>
<path d="M1451.8 564.4h11.7" stroke="#fff" stroke-width="0.8" opacity="0.68"/><path d="M1452.2 567.4h11.1" stroke="#fff" stroke-width="0.7" opacity="0.38"/><path d="M1451.8 569.8h11.7" stroke="#fff" stroke-width="0.7" opacity="0.38"/>
<circle cx="1512.0" cy="568.5" r="11.8" fill="#46b6e0"/>
<path d="M1504.6 565.6h14.7" stroke="#fff" stroke-width="0.8" opacity="0.68"/><path d="M1509.6 568.6h4.8" stroke="#fff" stroke-width="0.7" opacity="0.38"/>
<circle cx="1540.4" cy="568.5" r="11.8" fill="#46b6e0"/>
<path d="M1534.5 563.2h11.8" stroke="#fff" stroke-width="0.8" opacity="0.68"/><path d="M1535.7 566.2h9.3" stroke="#fff" stroke-width="0.7" opacity="0.38"/><path d="M1537.5 568.6h5.8" stroke="#fff" stroke-width="0.7" opacity="0.38"/><path d="M1535.6 571.0h9.7" stroke="#fff" stroke-width="0.7" opacity="0.38"/>
<circle cx="1587.4" cy="568.5" r="11.8" fill="#46b6e0"/>
<path d="M1580.9 560.8h13.0" stroke="#fff" stroke-width="0.8" opacity="0.68"/><path d="M1583.7 563.8h7.4" stroke="#fff" stroke-width="0.7" opacity="0.38"/><path d="M1584.0 566.2h6.9" stroke="#fff" stroke-width="0.7" opacity="0.38"/><path d="M1585.0 568.6h4.7" stroke="#fff" stroke-width="0.7" opacity="0.38"/><path d="M1583.9 571.0h6.9" stroke="#fff" stroke-width="0.7" opacity="0.38"/><path d="M1584.0 573.4h6.7" stroke="#fff" stroke-width="0.7" opacity="0.38"/>
<circle cx="1634.7" cy="568.5" r="11.8" fill="#46b6e0"/>
<path d="M1628.1 563.2h13.2" stroke="#fff" stroke-width="0.8" opacity="0.68"/><path d="M1632.6 566.2h4.1" stroke="#fff" stroke-width="0.7" opacity="0.38"/><path d="M1631.4 568.6h6.7" stroke="#fff" stroke-width="0.7" opacity="0.38"/><path d="M1630.2 571.0h9.0" stroke="#fff" stroke-width="0.7" opacity="0.38"/>
<circle cx="1663.2" cy="568.5" r="11.8" fill="#46b6e0"/>
<path d="M1655.3 560.8h15.8" stroke="#fff" stroke-width="0.8" opacity="0.68"/><path d="M1660.7 563.8h4.9" stroke="#fff" stroke-width="0.7" opacity="0.38"/><path d="M1657.5 566.2h11.3" stroke="#fff" stroke-width="0.7" opacity="0.38"/><path d="M1660.3 568.6h5.8" stroke="#fff" stroke-width="0.7" opacity="0.38"/><path d="M1657.7 571.0h11.0" stroke="#fff" stroke-width="0.7" opacity="0.38"/><path d="M1660.9 573.4h4.7" stroke="#fff" stroke-width="0.7" opacity="0.38"/>
<circle cx="1702.5" cy="568.5" r="11.8" fill="#46b6e0"/>
<path d="M1696.9 565.6h11.2" stroke="#fff" stroke-width="0.8" opacity="0.68"/><path d="M1697.4 568.6h10.2" stroke="#fff" stroke-width="0.7" opacity="0.38"/>
<circle cx="1774.0" cy="568.5" r="11.8" fill="#46b6e0"/>
<path d="M1766.6 565.6h14.8" stroke="#fff" stroke-width="0.8" opacity="0.68"/><path d="M1768.7 568.6h10.6" stroke="#fff" stroke-width="0.7" opacity="0.38"/>
<circle cx="965.4" cy="616.0" r="11.8" fill="#46b6e0"/>
<path d="M958.9 613.1h13.0" stroke="#fff" stroke-width="0.8" opacity="0.68"/><path d="M961.3 616.1h8.3" stroke="#fff" stroke-width="0.7" opacity="0.38"/>
<circle cx="1022.4" cy="616.0" r="11.8" fill="#46b6e0"/>
<path d="M1015.5 608.3h13.9" stroke="#fff" stroke-width="0.8" opacity="0.68"/><path d="M1017.6 611.3h9.6" stroke="#fff" stroke-width="0.7" opacity="0.38"/><path d="M1020.0 613.7h4.7" stroke="#fff" stroke-width="0.7" opacity="0.38"/><path d="M1020.2 616.1h4.5" stroke="#fff" stroke-width="0.7" opacity="0.38"/><path d="M1017.6 618.5h9.5" stroke="#fff" stroke-width="0.7" opacity="0.38"/><path d="M1018.7 620.9h7.4" stroke="#fff" stroke-width="0.7" opacity="0.38"/>
<circle cx="1079.0" cy="616.0" r="11.8" fill="#46b6e0"/>
<path d="M1072.8 613.1h12.3" stroke="#fff" stroke-width="0.8" opacity="0.68"/><path d="M1076.9 616.1h4.1" stroke="#fff" stroke-width="0.7" opacity="0.38"/>
<circle cx="1107.7" cy="616.0" r="11.8" fill="#46b6e0"/>
<path d="M1100.2 613.1h15.0" stroke="#fff" stroke-width="0.8" opacity="0.68"/><path d="M1105.4 616.1h4.7" stroke="#fff" stroke-width="0.7" opacity="0.38"/>
<circle cx="1144.8" cy="616.0" r="11.8" fill="#46b6e0"/>
<path d="M1139.1 613.1h11.3" stroke="#fff" stroke-width="0.8" opacity="0.68"/><path d="M1139.3 616.1h10.9" stroke="#fff" stroke-width="0.7" opacity="0.38"/>
<rect x="1160.8" y="603.5" width="25" height="25" fill="#141414" opacity="0.6"/>
<g transform="translate(1161.3 604.0)"><rect width="24" height="24" fill="#7fb3d8"/><rect x="0" y="0" width="4" height="24" fill="#b0662a"/><path d="M3 24V12Q5 8 9 9L14 11V24Z" fill="#f2f2f2"/><ellipse cx="9.5" cy="6.5" rx="3.5" ry="4" fill="#7a4a28"/><path d="M6 4Q9 1 12 3V6L9 5Z" fill="#151515"/><path d="M4 24Q4 15 10 16L14 24Z" fill="#101010"/><ellipse cx="16" cy="8" rx="2.5" ry="3" fill="#8a5a30"/><rect x="13" y="6.5" width="6" height="2" fill="#1a2a3a"/><path d="M14 12H20V24H14Z" fill="#e8e8e8"/><path d="M16 15h2v6h-2Z" fill="#111"/><path d="M20 10H24V24H20Z" fill="#2a4a6a"/></g>
<text x="1173.3" y="632.2" text-anchor="middle" font-family="Liberation Sans" font-weight="bold" font-size="4.1" fill="#f8f8f8" stroke="#161616" stroke-width="0.8" paint-order="stroke" letter-spacing="-0.12">Jimmy Page</text>
<rect x="1189.3" y="603.5" width="25" height="25" fill="#141414" opacity="0.6"/>
<g transform="translate(1189.8 604.0)"><rect x="0" y="0" width="24" height="24" fill="#c4c4c4"/><circle cx="12" cy="9.6" r="5.1" fill="#fff"/><path d="M3 24 Q3.6 15 12 14.9 Q20.4 15 21 24 Z" fill="#fff"/></g>
<text x="1201.8" y="632.2" text-anchor="middle" font-family="Liberation Sans" font-weight="bold" font-size="4.1" fill="#f8f8f8" stroke="#161616" stroke-width="0.8" paint-order="stroke" letter-spacing="-0.12">Bjorn Ulvaeus</text>
<rect x="1217.5" y="603.5" width="25" height="25" fill="#141414" opacity="0.6"/>
<g transform="translate(1218.0 604.0)"><rect x="0" y="0" width="24" height="24" fill="#c4c4c4"/><circle cx="12" cy="9.6" r="5.1" fill="#fff"/><path d="M3 24 Q3.6 15 12 14.9 Q20.4 15 21 24 Z" fill="#fff"/></g>
<text x="1230.0" y="632.2" text-anchor="middle" font-family="Liberation Sans" font-weight="bold" font-size="4.1" fill="#f8f8f8" stroke="#161616" stroke-width="0.8" paint-order="stroke" letter-spacing="-0.12">Chad Smith</text>
<rect x="1245.7" y="603.5" width="25" height="25" fill="#141414" opacity="0.6"/>
<g transform="translate(1246.2 604.0)"><rect x="0" y="0" width="24" height="24" fill="#c4c4c4"/><circle cx="12" cy="9.6" r="5.1" fill="#fff"/><path d="M3 24 Q3.6 15 12 14.9 Q20.4 15 21 24 Z" fill="#fff"/></g>
<text x="1258.2" y="632.2" text-anchor="middle" font-family="Liberation Sans" font-weight="bold" font-size="4.1" fill="#f8f8f8" stroke="#161616" stroke-width="0.8" paint-order="stroke" letter-spacing="-0.12">Ginger Baker</text>
<circle cx="1287.0" cy="616.0" r="11.8" fill="#46b6e0"/>
<path d="M1279.2 611.9h15.6" stroke="#fff" stroke-width="0.8" opacity="0.68"/><path d="M1283.9 614.9h6.1" stroke="#fff" stroke-width="0.7" opacity="0.38"/><path d="M1284.5 617.3h5.0" stroke="#fff" stroke-width="0.7" opacity="0.38"/>
<circle cx="1315.6" cy="616.0" r="11.8" fill="#46b6e0"/>
<path d="M1308.3 608.3h14.5" stroke="#fff" stroke-width="0.8" opacity="0.68"/><path d="M1309.8 611.3h11.5" stroke="#fff" stroke-width="0.7" opacity="0.38"/><path d="M1309.7 613.7h11.8" stroke="#fff" stroke-width="0.7" opacity="0.38"/><path d="M1312.6 616.1h6.1" stroke="#fff" stroke-width="0.7" opacity="0.38"/><path d="M1312.9 618.5h5.4" stroke="#fff" stroke-width="0.7" opacity="0.38"/><path d="M1309.9 620.9h11.5" stroke="#fff" stroke-width="0.7" opacity="0.38"/>
<circle cx="1343.7" cy="616.0" r="11.8" fill="#46b6e0"/>
<path d="M1336.9 613.1h13.7" stroke="#fff" stroke-width="0.8" opacity="0.68"/><path d="M1340.9 616.1h5.6" stroke="#fff" stroke-width="0.7" opacity="0.38"/>
<rect x="1359.5" y="603.5" width="25" height="25" fill="#141414" opacity="0.6"/>
<g transform="translate(1360.0 604.0)"><rect x="0" y="0" width="24" height="24" fill="#c4c4c4"/><circle cx="12" cy="9.6" r="5.1" fill="#fff"/><path d="M3 24 Q3.6 15 12 14.9 Q20.4 15 21 24 Z" fill="#fff"/></g>
<text x="1372.0" y="632.2" text-anchor="middle" font-family="Liberation Sans" font-weight="bold" font-size="4.1" fill="#f8f8f8" stroke="#161616" stroke-width="0.8" paint-order="stroke" letter-spacing="-0.12">Jimmy Page</text>
<rect x="1388.8" y="603.5" width="25" height="25" fill="#141414" opacity="0.6"/>
<g transform="translate(1389.3 604.0)"><rect x="0" y="0" width="24" height="24" fill="#c4c4c4"/><circle cx="12" cy="9.6" r="5.1" fill="#fff"/><path d="M3 24 Q3.6 15 12 14.9 Q20.4 15 21 24 Z" fill="#fff"/></g>
<text x="1401.3" y="632.2" text-anchor="middle" font-family="Liberation Sans" font-weight="bold" font-size="4.1" fill="#f8f8f8" stroke="#161616" stroke-width="0.8" paint-order="stroke" letter-spacing="-0.12">Steve Winwood</text>
<rect x="1417.0" y="603.5" width="25" height="25" fill="#141414" opacity="0.6"/>
<g transform="translate(1417.5 604.0)"><rect x="0" y="0" width="24" height="24" fill="#c4c4c4"/><circle cx="12" cy="9.6" r="5.1" fill="#fff"/><path d="M3 24 Q3.6 15 12 14.9 Q20.4 15 21 24 Z" fill="#fff"/></g>
<text x="1429.5" y="632.2" text-anchor="middle" font-family="Liberation Sans" font-weight="bold" font-size="4.1" fill="#f8f8f8" stroke="#161616" stroke-width="0.8" paint-order="stroke" letter-spacing="-0.12">Nick Mason</text>
<circle cx="1457.7" cy="616.0" r="11.8" fill="#46b6e0"/>
<path d="M1451.5 613.1h12.4" stroke="#fff" stroke-width="0.8" opacity="0.68"/><path d="M1452.5 616.1h10.4" stroke="#fff" stroke-width="0.7" opacity="0.38"/>
<circle cx="1540.4" cy="616.0" r="11.8" fill="#46b6e0"/>
<path d="M1534.8 613.1h11.2" stroke="#fff" stroke-width="0.8" opacity="0.68"/><path d="M1538.3 616.1h4.1" stroke="#fff" stroke-width="0.7" opacity="0.38"/>
<circle cx="1587.4" cy="616.0" r="11.8" fill="#46b6e0"/>
<path d="M1580.5 608.3h13.8" stroke="#fff" stroke-width="0.8" opacity="0.68"/><path d="M1584.6 611.3h5.5" stroke="#fff" stroke-width="0.7" opacity="0.38"/><path d="M1583.5 613.7h7.8" stroke="#fff" stroke-width="0.7" opacity="0.38"/><path d="M1581.7 616.1h11.5" stroke="#fff" stroke-width="0.7" opacity="0.38"/><path d="M1585.0 618.5h4.9" stroke="#fff" stroke-width="0.7" opacity="0.38"/><path d="M1582.1 620.9h10.6" stroke="#fff" stroke-width="0.7" opacity="0.38"/>
<circle cx="1653.7" cy="616.0" r="11.8" fill="#46b6e0"/>
<path d="M1646.6 611.9h14.3" stroke="#fff" stroke-width="0.8" opacity="0.68"/><path d="M1649.5 614.9h8.4" stroke="#fff" stroke-width="0.7" opacity="0.38"/><path d="M1648.1 617.3h11.1" stroke="#fff" stroke-width="0.7" opacity="0.38"/>
<circle cx="1682.2" cy="616.0" r="11.8" fill="#46b6e0"/>
<path d="M1675.9 608.3h12.5" stroke="#fff" stroke-width="0.8" opacity="0.68"/><path d="M1679.3 611.3h5.7" stroke="#fff" stroke-width="0.7" opacity="0.38"/><path d="M1679.3 613.7h5.8" stroke="#fff" stroke-width="0.7" opacity="0.38"/><path d="M1679.4 616.1h5.6" stroke="#fff" stroke-width="0.7" opacity="0.38"/><path d="M1676.7 618.5h11.1" stroke="#fff" stroke-width="0.7" opacity="0.38"/><path d="M1677.3 620.9h9.8" stroke="#fff" stroke-width="0.7" opacity="0.38"/>
<circle cx="1710.4" cy="616.0" r="11.8" fill="#46b6e0"/>
<path d="M1703.9 613.1h13.0" stroke="#fff" stroke-width="0.8" opacity="0.68"/><path d="M1707.0 616.1h6.8" stroke="#fff" stroke-width="0.7" opacity="0.38"/>
<circle cx="1774.0" cy="616.0" r="11.8" fill="#46b6e0"/>
<path d="M1766.4 613.1h15.2" stroke="#fff" stroke-width="0.8" opacity="0.68"/><path d="M1771.9 616.1h4.1" stroke="#fff" stroke-width="0.7" opacity="0.38"/>
<circle cx="973.3" cy="663.2" r="11.8" fill="#46b6e0"/>
<path d="M966.7 660.3h13.2" stroke="#fff" stroke-width="0.8" opacity="0.68"/><path d="M971.1 663.3h4.4" stroke="#fff" stroke-width="0.7" opacity="0.38"/>
<circle cx="1022.4" cy="663.2" r="11.8" fill="#46b6e0"/>
<path d="M1014.7 659.1h15.4" stroke="#fff" stroke-width="0.8" opacity="0.68"/><path d="M1017.7 662.1h9.4" stroke="#fff" stroke-width="0.7" opacity="0.38"/><path d="M1019.3 664.5h6.3" stroke="#fff" stroke-width="0.7" opacity="0.38"/>
<circle cx="1116.0" cy="663.2" r="11.8" fill="#46b6e0"/>
<path d="M1108.8 660.3h14.5" stroke="#fff" stroke-width="0.8" opacity="0.68"/><path d="M1113.8 663.3h4.4" stroke="#fff" stroke-width="0.7" opacity="0.38"/>
<circle cx="1144.6" cy="663.2" r="11.8" fill="#46b6e0"/>
<path d="M1138.7 660.3h11.8" stroke="#fff" stroke-width="0.8" opacity="0.68"/><path d="M1140.8 663.3h7.6" stroke="#fff" stroke-width="0.7" opacity="0.38"/>
<circle cx="1204.3" cy="663.2" r="11.8" fill="#46b6e0"/>
<path d="M1197.9 660.3h12.8" stroke="#fff" stroke-width="0.8" opacity="0.68"/><path d="M1201.0 663.3h6.6" stroke="#fff" stroke-width="0.7" opacity="0.38"/>
<circle cx="1281.2" cy="663.2" r="11.8" fill="#46b6e0"/>
<path d="M1274.9 655.5h12.6" stroke="#fff" stroke-width="0.8" opacity="0.68"/><path d="M1279.1 658.5h4.3" stroke="#fff" stroke-width="0.7" opacity="0.38"/><path d="M1275.7 660.9h11.1" stroke="#fff" stroke-width="0.7" opacity="0.38"/><path d="M1278.3 663.3h5.7" stroke="#fff" stroke-width="0.7" opacity="0.38"/><path d="M1278.5 665.7h5.5" stroke="#fff" stroke-width="0.7" opacity="0.38"/><path d="M1277.9 668.1h6.7" stroke="#fff" stroke-width="0.7" opacity="0.38"/>
<circle cx="1309.6" cy="663.2" r="11.8" fill="#46b6e0"/>
<path d="M1302.9 660.3h13.4" stroke="#fff" stroke-width="0.8" opacity="0.68"/><path d="M1305.6 663.3h8.0" stroke="#fff" stroke-width="0.7" opacity="0.38"/>
<circle cx="1343.7" cy="663.2" r="11.8" fill="#46b6e0"/>
<path d="M1337.6 660.3h12.2" stroke="#fff" stroke-width="0.8" opacity="0.68"/><path d="M1338.6 663.3h10.2" stroke="#fff" stroke-width="0.7" opacity="0.38"/>
<circle cx="1380.7" cy="663.2" r="11.8" fill="#46b6e0"/>
<path d="M1374.5 660.3h12.3" stroke="#fff" stroke-width="0.8" opacity="0.68"/><path d="M1378.3 663.3h4.7" stroke="#fff" stroke-width="0.7" opacity="0.38"/>
<circle cx="1457.7" cy="663.2" r="11.8" fill="#46b6e0"/>
<path d="M1450.7 659.1h13.9" stroke="#fff" stroke-width="0.8" opacity="0.68"/><path d="M1454.1 662.1h7.2" stroke="#fff" stroke-width="0.7" opacity="0.38"/><path d="M1454.5 664.5h6.4" stroke="#fff" stroke-width="0.7" opacity="0.38"/>
<circle cx="1540.4" cy="663.2" r="11.8" fill="#46b6e0"/>
<path d="M1534.7 660.3h11.4" stroke="#fff" stroke-width="0.8" opacity="0.68"/><path d="M1534.6 663.3h11.7" stroke="#fff" stroke-width="0.7" opacity="0.38"/>
<circle cx="1653.7" cy="663.2" r="11.8" fill="#46b6e0"/>
<path d="M1646.6 660.3h14.3" stroke="#fff" stroke-width="0.8" opacity="0.68"/><path d="M1648.8 663.3h9.7" stroke="#fff" stroke-width="0.7" opacity="0.38"/>
<circle cx="1774.0" cy="663.2" r="11.8" fill="#46b6e0"/>
<path d="M1766.6 659.1h14.8" stroke="#fff" stroke-width="0.8" opacity="0.68"/><path d="M1769.1 662.1h9.8" stroke="#fff" stroke-width="0.7" opacity="0.38"/><path d="M1770.0 664.5h8.0" stroke="#fff" stroke-width="0.7" opacity="0.38"/>
<circle cx="963.6" cy="710.6" r="11.8" fill="#46b6e0"/>
<path d="M956.3 707.7h14.6" stroke="#fff" stroke-width="0.8" opacity="0.68"/><path d="M959.0 710.7h9.1" stroke="#fff" stroke-width="0.7" opacity="0.38"/>
<circle cx="1109.9" cy="710.6" r="11.8" fill="#46b6e0"/>
<path d="M1102.3 707.7h15.1" stroke="#fff" stroke-width="0.8" opacity="0.68"/><path d="M1105.0 710.7h9.7" stroke="#fff" stroke-width="0.7" opacity="0.38"/>
<circle cx="1146.3" cy="710.6" r="11.8" fill="#46b6e0"/>
<path d="M1139.2 702.9h14.1" stroke="#fff" stroke-width="0.8" opacity="0.68"/><path d="M1141.4 705.9h9.9" stroke="#fff" stroke-width="0.7" opacity="0.38"/><path d="M1141.1 708.3h10.5" stroke="#fff" stroke-width="0.7" opacity="0.38"/><path d="M1143.7 710.7h5.1" stroke="#fff" stroke-width="0.7" opacity="0.38"/><path d="M1142.2 713.1h8.2" stroke="#fff" stroke-width="0.7" opacity="0.38"/><path d="M1142.3 715.5h8.0" stroke="#fff" stroke-width="0.7" opacity="0.38"/>
<circle cx="1281.2" cy="710.6" r="11.8" fill="#46b6e0"/>
<path d="M1273.6 707.7h15.1" stroke="#fff" stroke-width="0.8" opacity="0.68"/><path d="M1276.9 710.7h8.7" stroke="#fff" stroke-width="0.7" opacity="0.38"/>
<circle cx="1323.7" cy="710.6" r="11.8" fill="#46b6e0"/>
<path d="M1318.0 707.7h11.4" stroke="#fff" stroke-width="0.8" opacity="0.68"/><path d="M1321.5 710.7h4.3" stroke="#fff" stroke-width="0.7" opacity="0.38"/>
<circle cx="1386.1" cy="710.6" r="11.8" fill="#46b6e0"/>
<path d="M1378.2 706.5h15.8" stroke="#fff" stroke-width="0.8" opacity="0.68"/><path d="M1382.6 709.5h7.0" stroke="#fff" stroke-width="0.7" opacity="0.38"/><path d="M1382.3 711.9h7.6" stroke="#fff" stroke-width="0.7" opacity="0.38"/>
<circle cx="1478.3" cy="710.6" r="11.8" fill="#46b6e0"/>
<path d="M1471.2 707.7h14.1" stroke="#fff" stroke-width="0.8" opacity="0.68"/><path d="M1473.8 710.7h9.0" stroke="#fff" stroke-width="0.7" opacity="0.38"/>
<circle cx="1540.4" cy="710.6" r="11.8" fill="#46b6e0"/>
<path d="M1533.7 707.7h13.4" stroke="#fff" stroke-width="0.8" opacity="0.68"/><path d="M1538.4 710.7h4.0" stroke="#fff" stroke-width="0.7" opacity="0.38"/>
<circle cx="1653.7" cy="710.6" r="11.8" fill="#46b6e0"/>
<path d="M1646.3 707.7h14.7" stroke="#fff" stroke-width="0.8" opacity="0.68"/><path d="M1649.7 710.7h8.0" stroke="#fff" stroke-width="0.7" opacity="0.38"/>
<circle cx="1774.0" cy="710.6" r="11.8" fill="#46b6e0"/>
<path d="M1768.3 702.9h11.5" stroke="#fff" stroke-width="0.8" opacity="0.68"/><path d="M1769.9 705.9h8.2" stroke="#fff" stroke-width="0.7" opacity="0.38"/><path d="M1769.0 708.3h10.0" stroke="#fff" stroke-width="0.7" opacity="0.38"/><path d="M1770.1 710.7h7.8" stroke="#fff" stroke-width="0.7" opacity="0.38"/><path d="M1768.8 713.1h10.5" stroke="#fff" stroke-width="0.7" opacity="0.38"/><path d="M1768.6 715.5h10.8" stroke="#fff" stroke-width="0.7" opacity="0.38"/>
<circle cx="972.4" cy="758.5" r="11.8" fill="#46b6e0"/>
<path d="M965.1 755.6h14.6" stroke="#fff" stroke-width="0.8" opacity="0.68"/><path d="M969.6 758.6h5.6" stroke="#fff" stroke-width="0.7" opacity="0.38"/>
<circle cx="1116.0" cy="758.5" r="11.8" fill="#46b6e0"/>
<path d="M1109.3 753.2h13.5" stroke="#fff" stroke-width="0.8" opacity="0.68"/><path d="M1112.5 756.2h7.1" stroke="#fff" stroke-width="0.7" opacity="0.38"/><path d="M1112.1 758.6h7.8" stroke="#fff" stroke-width="0.7" opacity="0.38"/><path d="M1111.3 761.0h9.5" stroke="#fff" stroke-width="0.7" opacity="0.38"/>
<circle cx="1144.6" cy="758.5" r="11.8" fill="#46b6e0"/>
<path d="M1137.6 755.6h14.1" stroke="#fff" stroke-width="0.8" opacity="0.68"/><path d="M1140.0 758.6h9.1" stroke="#fff" stroke-width="0.7" opacity="0.38"/>
<circle cx="1295.3" cy="758.5" r="11.8" fill="#46b6e0"/>
<path d="M1288.3 755.6h14.0" stroke="#fff" stroke-width="0.8" opacity="0.68"/><path d="M1292.0 758.6h6.7" stroke="#fff" stroke-width="0.7" opacity="0.38"/>
<circle cx="1323.7" cy="758.5" r="11.8" fill="#46b6e0"/>
<path d="M1316.6 755.6h14.1" stroke="#fff" stroke-width="0.8" opacity="0.68"/><path d="M1321.2 758.6h5.1" stroke="#fff" stroke-width="0.7" opacity="0.38"/>
<circle cx="1352.4" cy="758.5" r="11.8" fill="#46b6e0"/>
<path d="M1346.7 753.2h11.3" stroke="#fff" stroke-width="0.8" opacity="0.68"/><path d="M1349.3 756.2h6.2" stroke="#fff" stroke-width="0.7" opacity="0.38"/><path d="M1347.7 758.6h9.4" stroke="#fff" stroke-width="0.7" opacity="0.38"/><path d="M1347.6 761.0h9.5" stroke="#fff" stroke-width="0.7" opacity="0.38"/>
<circle cx="1477.9" cy="758.5" r="11.8" fill="#46b6e0"/>
<path d="M1471.7 753.2h12.5" stroke="#fff" stroke-width="0.8" opacity="0.68"/><path d="M1473.8 756.2h8.1" stroke="#fff" stroke-width="0.7" opacity="0.38"/><path d="M1474.0 758.6h7.7" stroke="#fff" stroke-width="0.7" opacity="0.38"/><path d="M1474.0 761.0h7.7" stroke="#fff" stroke-width="0.7" opacity="0.38"/>
<circle cx="1625.0" cy="758.5" r="11.8" fill="#46b6e0"/>
<path d="M1617.0 755.6h16.0" stroke="#fff" stroke-width="0.8" opacity="0.68"/><path d="M1620.8 758.6h8.4" stroke="#fff" stroke-width="0.7" opacity="0.38"/>
<circle cx="1653.7" cy="758.5" r="11.8" fill="#46b6e0"/>
<path d="M1645.8 755.6h15.9" stroke="#fff" stroke-width="0.8" opacity="0.68"/><path d="M1648.0 758.6h11.5" stroke="#fff" stroke-width="0.7" opacity="0.38"/>
<circle cx="1682.2" cy="758.5" r="11.8" fill="#46b6e0"/>
<path d="M1676.0 755.6h12.4" stroke="#fff" stroke-width="0.8" opacity="0.68"/><path d="M1679.9 758.6h4.6" stroke="#fff" stroke-width="0.7" opacity="0.38"/>
<circle cx="1774.0" cy="758.5" r="11.8" fill="#46b6e0"/>
<path d="M1766.1 750.8h15.8" stroke="#fff" stroke-width="0.8" opacity="0.68"/><path d="M1770.2 753.8h7.6" stroke="#fff" stroke-width="0.7" opacity="0.38"/><path d="M1770.9 756.2h6.1" stroke="#fff" stroke-width="0.7" opacity="0.38"/><path d="M1771.2 758.6h5.7" stroke="#fff" stroke-width="0.7" opacity="0.38"/><path d="M1768.2 761.0h11.6" stroke="#fff" stroke-width="0.7" opacity="0.38"/><path d="M1771.2 763.4h5.7" stroke="#fff" stroke-width="0.7" opacity="0.38"/>
<circle cx="966.4" cy="805.5" r="11.8" fill="#46b6e0"/>
<path d="M960.5 802.6h11.7" stroke="#fff" stroke-width="0.8" opacity="0.68"/><path d="M962.3 805.6h8.2" stroke="#fff" stroke-width="0.7" opacity="0.38"/>
<circle cx="995.0" cy="805.5" r="11.8" fill="#46b6e0"/>
<path d="M989.2 801.4h11.7" stroke="#fff" stroke-width="0.8" opacity="0.68"/><path d="M989.7 804.4h10.6" stroke="#fff" stroke-width="0.7" opacity="0.38"/><path d="M991.0 806.8h8.1" stroke="#fff" stroke-width="0.7" opacity="0.38"/>
<circle cx="1116.0" cy="805.5" r="11.8" fill="#46b6e0"/>
<path d="M1108.7 802.6h14.5" stroke="#fff" stroke-width="0.8" opacity="0.68"/><path d="M1113.1 805.6h5.9" stroke="#fff" stroke-width="0.7" opacity="0.38"/>
<rect x="1165.4" y="793.0" width="25" height="25" fill="#141414" opacity="0.6"/>
<g transform="translate(1165.9 793.5)"><rect x="0" y="0" width="24" height="24" fill="#c4c4c4"/><circle cx="12" cy="9.6" r="5.1" fill="#fff"/><path d="M3 24 Q3.6 15 12 14.9 Q20.4 15 21 24 Z" fill="#fff"/></g>
<text x="1177.9" y="821.7" text-anchor="middle" font-family="Liberation Sans" font-weight="bold" font-size="4.1" fill="#f8f8f8" stroke="#161616" stroke-width="0.8" paint-order="stroke" letter-spacing="-0.12">Robert Plant</text>
<rect x="1193.8" y="793.0" width="25" height="25" fill="#141414" opacity="0.6"/>
<g transform="translate(1194.3 793.5)"><rect x="0" y="0" width="24" height="24" fill="#c4c4c4"/><circle cx="12" cy="9.6" r="5.1" fill="#fff"/><path d="M3 24 Q3.6 15 12 14.9 Q20.4 15 21 24 Z" fill="#fff"/></g>
<text x="1206.3" y="821.7" text-anchor="middle" font-family="Liberation Sans" font-weight="bold" font-size="4.1" fill="#f8f8f8" stroke="#161616" stroke-width="0.8" paint-order="stroke" letter-spacing="-0.12">Kurt Cobain</text>
<rect x="1222.3" y="793.0" width="25" height="25" fill="#141414" opacity="0.6"/>
<g transform="translate(1222.8 793.5)"><rect x="0" y="0" width="24" height="24" fill="#c4c4c4"/><circle cx="12" cy="9.6" r="5.1" fill="#fff"/><path d="M3 24 Q3.6 15 12 14.9 Q20.4 15 21 24 Z" fill="#fff"/></g>
<text x="1234.8" y="821.7" text-anchor="middle" font-family="Liberation Sans" font-weight="bold" font-size="4.1" fill="#f8f8f8" stroke="#161616" stroke-width="0.8" paint-order="stroke" letter-spacing="-0.12">Bjorn Ulvaeus</text>
<rect x="1250.9" y="793.0" width="25" height="25" fill="#141414" opacity="0.6"/>
<g transform="translate(1251.4 793.5)"><rect x="0" y="0" width="24" height="24" fill="#c4c4c4"/><circle cx="12" cy="9.6" r="5.1" fill="#fff"/><path d="M3 24 Q3.6 15 12 14.9 Q20.4 15 21 24 Z" fill="#fff"/></g>
<text x="1263.4" y="821.7" text-anchor="middle" font-family="Liberation Sans" font-weight="bold" font-size="4.1" fill="#f8f8f8" stroke="#161616" stroke-width="0.8" paint-order="stroke" letter-spacing="-0.12">John Lennon</text>
<circle cx="1302.5" cy="805.5" r="11.8" fill="#46b6e0"/>
<path d="M1294.6 802.6h15.7" stroke="#fff" stroke-width="0.8" opacity="0.68"/><path d="M1297.8 805.6h9.5" stroke="#fff" stroke-width="0.7" opacity="0.38"/>
<circle cx="1352.4" cy="805.5" r="11.8" fill="#46b6e0"/>
<path d="M1346.1 801.4h12.5" stroke="#fff" stroke-width="0.8" opacity="0.68"/><path d="M1349.8 804.4h5.1" stroke="#fff" stroke-width="0.7" opacity="0.38"/><path d="M1349.0 806.8h6.8" stroke="#fff" stroke-width="0.7" opacity="0.38"/>
<circle cx="1477.9" cy="805.5" r="11.8" fill="#46b6e0"/>
<path d="M1472.1 801.4h11.6" stroke="#fff" stroke-width="0.8" opacity="0.68"/><path d="M1474.6 804.4h6.7" stroke="#fff" stroke-width="0.7" opacity="0.38"/><path d="M1474.6 806.8h6.6" stroke="#fff" stroke-width="0.7" opacity="0.38"/>
<circle cx="1639.4" cy="805.5" r="11.8" fill="#46b6e0"/>
<path d="M1631.8 801.4h15.2" stroke="#fff" stroke-width="0.8" opacity="0.68"/><path d="M1636.9 804.4h5.0" stroke="#fff" stroke-width="0.7" opacity="0.38"/><path d="M1633.7 806.8h11.4" stroke="#fff" stroke-width="0.7" opacity="0.38"/>
<circle cx="1667.8" cy="805.5" r="11.8" fill="#46b6e0"/>
<path d="M1660.0 802.6h15.5" stroke="#fff" stroke-width="0.8" opacity="0.68"/><path d="M1664.6 805.6h6.3" stroke="#fff" stroke-width="0.7" opacity="0.38"/>
<circle cx="966.4" cy="853.0" r="11.8" fill="#46b6e0"/>
<path d="M960.7 848.9h11.3" stroke="#fff" stroke-width="0.8" opacity="0.68"/><path d="M962.8 851.9h7.1" stroke="#fff" stroke-width="0.7" opacity="0.38"/><path d="M960.9 854.3h11.0" stroke="#fff" stroke-width="0.7" opacity="0.38"/>
<circle cx="995.0" cy="853.0" r="11.8" fill="#46b6e0"/>
<path d="M988.6 850.1h12.8" stroke="#fff" stroke-width="0.8" opacity="0.68"/><path d="M991.3 853.1h7.4" stroke="#fff" stroke-width="0.7" opacity="0.38"/>
<circle cx="1116.0" cy="853.0" r="11.8" fill="#46b6e0"/>
<path d="M1108.4 850.1h15.3" stroke="#fff" stroke-width="0.8" opacity="0.68"/><path d="M1112.9 853.1h6.2" stroke="#fff" stroke-width="0.7" opacity="0.38"/>
<circle cx="1232.2" cy="853.0" r="11.8" fill="#46b6e0"/>
<path d="M1224.6 850.1h15.2" stroke="#fff" stroke-width="0.8" opacity="0.68"/><path d="M1229.1 853.1h6.3" stroke="#fff" stroke-width="0.7" opacity="0.38"/>
<circle cx="1323.7" cy="853.0" r="11.8" fill="#46b6e0"/>
<path d="M1317.6 850.1h12.2" stroke="#fff" stroke-width="0.8" opacity="0.68"/><path d="M1320.6 853.1h6.1" stroke="#fff" stroke-width="0.7" opacity="0.38"/>
<circle cx="1639.4" cy="853.0" r="11.8" fill="#46b6e0"/>
<path d="M1633.1 845.3h12.6" stroke="#fff" stroke-width="0.8" opacity="0.68"/><path d="M1634.3 848.3h10.2" stroke="#fff" stroke-width="0.7" opacity="0.38"/><path d="M1634.3 850.7h10.3" stroke="#fff" stroke-width="0.7" opacity="0.38"/><path d="M1635.7 853.1h7.4" stroke="#fff" stroke-width="0.7" opacity="0.38"/><path d="M1637.3 855.5h4.2" stroke="#fff" stroke-width="0.7" opacity="0.38"/><path d="M1634.4 857.9h10.1" stroke="#fff" stroke-width="0.7" opacity="0.38"/>
<circle cx="1667.8" cy="853.0" r="11.8" fill="#46b6e0"/>
<path d="M1660.0 848.9h15.6" stroke="#fff" stroke-width="0.8" opacity="0.68"/><path d="M1662.0 851.9h11.5" stroke="#fff" stroke-width="0.7" opacity="0.38"/><path d="M1663.6 854.3h8.4" stroke="#fff" stroke-width="0.7" opacity="0.38"/>
<circle cx="966.4" cy="900.5" r="11.8" fill="#46b6e0"/>
<path d="M960.8 897.6h11.2" stroke="#fff" stroke-width="0.8" opacity="0.68"/><path d="M961.5 900.6h9.9" stroke="#fff" stroke-width="0.7" opacity="0.38"/>
<circle cx="1226.4" cy="900.5" r="11.8" fill="#46b6e0"/>
<path d="M1219.4 895.2h14.1" stroke="#fff" stroke-width="0.8" opacity="0.68"/><path d="M1223.8 898.2h5.1" stroke="#fff" stroke-width="0.7" opacity="0.38"/><path d="M1220.9 900.6h11.0" stroke="#fff" stroke-width="0.7" opacity="0.38"/><path d="M1222.5 903.0h7.9" stroke="#fff" stroke-width="0.7" opacity="0.38"/>
<circle cx="1254.5" cy="900.5" r="11.8" fill="#46b6e0"/>
<path d="M1248.7 892.8h11.6" stroke="#fff" stroke-width="0.8" opacity="0.68"/><path d="M1250.6 895.8h7.8" stroke="#fff" stroke-width="0.7" opacity="0.38"/><path d="M1251.1 898.2h6.7" stroke="#fff" stroke-width="0.7" opacity="0.38"/><path d="M1251.3 900.6h6.4" stroke="#fff" stroke-width="0.7" opacity="0.38"/><path d="M1249.5 903.0h9.9" stroke="#fff" stroke-width="0.7" opacity="0.38"/><path d="M1248.6 905.4h11.8" stroke="#fff" stroke-width="0.7" opacity="0.38"/>
<circle cx="1323.7" cy="900.5" r="11.8" fill="#46b6e0"/>
<path d="M1317.2 897.6h13.0" stroke="#fff" stroke-width="0.8" opacity="0.68"/><path d="M1320.7 900.6h5.9" stroke="#fff" stroke-width="0.7" opacity="0.38"/>
<circle cx="1667.8" cy="900.5" r="11.8" fill="#46b6e0"/>
<path d="M1660.9 895.2h13.8" stroke="#fff" stroke-width="0.8" opacity="0.68"/><path d="M1664.2 898.2h7.2" stroke="#fff" stroke-width="0.7" opacity="0.38"/><path d="M1665.1 900.6h5.3" stroke="#fff" stroke-width="0.7" opacity="0.38"/><path d="M1665.2 903.0h5.3" stroke="#fff" stroke-width="0.7" opacity="0.38"/>
<circle cx="1226.4" cy="948.0" r="11.8" fill="#46b6e0"/>
<path d="M1219.6 945.1h13.5" stroke="#fff" stroke-width="0.8" opacity="0.68"/><path d="M1221.2 948.1h10.5" stroke="#fff" stroke-width="0.7" opacity="0.38"/>
<circle cx="1257.7" cy="948.0" r="11.8" fill="#46b6e0"/>
<path d="M1251.6 940.3h12.1" stroke="#fff" stroke-width="0.8" opacity="0.68"/><path d="M1252.1 943.3h11.3" stroke="#fff" stroke-width="0.7" opacity="0.38"/><path d="M1251.7 945.7h12.0" stroke="#fff" stroke-width="0.7" opacity="0.38"/><path d="M1253.9 948.1h7.6" stroke="#fff" stroke-width="0.7" opacity="0.38"/><path d="M1255.1 950.5h5.1" stroke="#fff" stroke-width="0.7" opacity="0.38"/><path d="M1254.9 952.9h5.5" stroke="#fff" stroke-width="0.7" opacity="0.38"/>
<circle cx="1329.5" cy="948.0" r="11.8" fill="#46b6e0"/>
<path d="M1323.6 945.1h11.9" stroke="#fff" stroke-width="0.8" opacity="0.68"/><path d="M1325.3 948.1h8.4" stroke="#fff" stroke-width="0.7" opacity="0.38"/>
<circle cx="1226.4" cy="995.6" r="11.8" fill="#46b6e0"/>
<path d="M1220.3 991.5h12.2" stroke="#fff" stroke-width="0.8" opacity="0.68"/><path d="M1223.4 994.5h6.1" stroke="#fff" stroke-width="0.7" opacity="0.38"/><path d="M1222.1 996.9h8.6" stroke="#fff" stroke-width="0.7" opacity="0.38"/>
<circle cx="1226.4" cy="1043.0" r="11.8" fill="#46b6e0"/>
<path d="M1219.0 1040.1h14.7" stroke="#fff" stroke-width="0.8" opacity="0.68"/><path d="M1222.7 1043.1h7.3" stroke="#fff" stroke-width="0.7" opacity="0.38"/>
</g></svg>
<div style="position:absolute;left:1790px;top:108px;width:12px;height:1px;background:#2f2f2f"></div><div style="position:absolute;left:1790px;top:119px;width:12px;height:2px;background:#141414"></div>
<div id="tb">
<svg width="108" height="30" viewBox="0 0 108 30">
<g fill="#f6f6f6"><circle cx="20" cy="13" r="5.9"/><circle cx="56" cy="13" r="5.9"/></g>
<g stroke="#f6f6f6" stroke-width="3.4"><path d="M11.2 22.6L16.8 17M47.2 22.6L52.8 17"/></g>
<g stroke="#1c1c1c" stroke-width="1.5"><path d="M16.3 13H23.7M20 9.3V16.7M52.2 13H59.8"/></g>
<g fill="#fff"><path d="M83 8H88L83 13Z M97.3 8H92.3L97.3 13Z M83 22.3H88L83 17.3Z M97.3 22.3H92.3L97.3 17.3Z"/></g>
</svg>
</div>
</body></html>
